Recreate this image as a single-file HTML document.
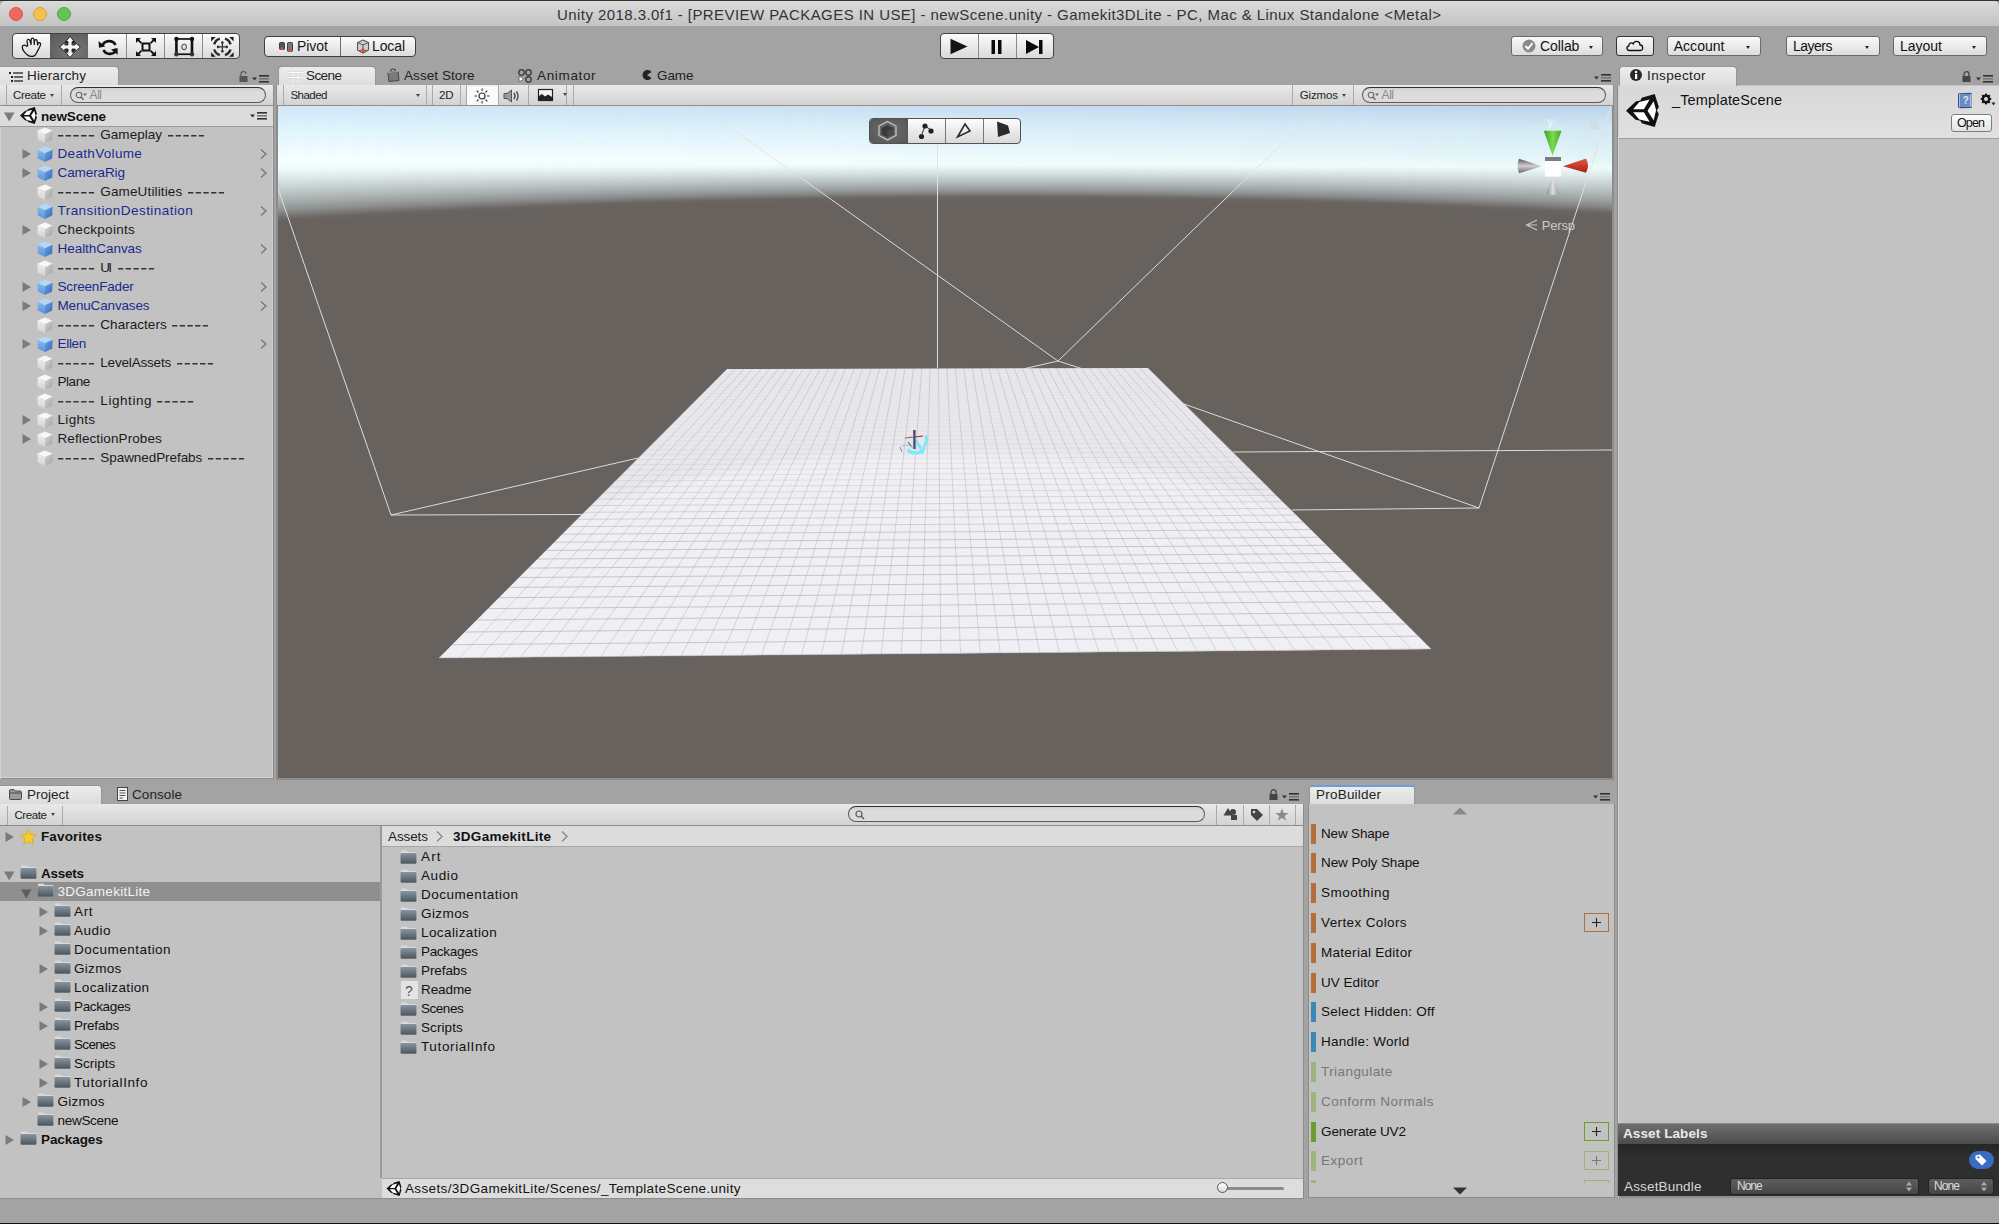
<!DOCTYPE html>
<html><head><meta charset="utf-8"><title>Unity</title>
<style>
*{margin:0;padding:0;box-sizing:border-box}
html,body{width:1999px;height:1224px;overflow:hidden;background:#000}
body{position:relative;font-family:"Liberation Sans",sans-serif;font-size:13px;color:#111}
.a{position:absolute}
svg.a{overflow:visible}
.t{position:absolute;white-space:pre;line-height:1}
#win{position:absolute;left:0;top:0;width:1999px;height:1224px;background:#A3A3A3;overflow:hidden}
.light{position:absolute;top:6px;width:14px;height:14px;border-radius:50%}
.rbtn{border:1px solid #6A6A6A;border-radius:3px;background:linear-gradient(#F9F9F9,#DDDDDD)}
.caret{position:absolute;width:0;height:0;border-left:2.5px solid transparent;border-right:2.5px solid transparent;border-top:3.5px solid #222}
.tab{position:absolute;background:linear-gradient(#EDEDED,#DCDCDC);border:1px solid #979797;border-bottom:none;border-radius:4px 4px 0 0}
.tbar{position:absolute;background:linear-gradient(#E9E9E9,#D2D2D2);border-bottom:1px solid #8E8E8E}

</style></head><body>
<div id="win">
<div class="a" style="left:0px;top:0px;width:1999px;height:1px;background:#33322A"></div>
<div class="a" style="left:0px;top:1px;width:1999px;height:25px;background:linear-gradient(#E0E0E0,#D9D9D9 8%,#C3C3C3);border-radius:5px 5px 0 0"></div>
<div class="a" style="left:0px;top:1px;width:6px;height:6px;background:#111;z-index:-1"></div>
<div class="light" style="left:9px;top:7px;background:#EE6A5E;border:1px solid #DC5548"></div>
<div class="light" style="left:33px;top:7px;background:#F5BE4F;border:1px solid #DCA23A"></div>
<div class="light" style="left:57px;top:7px;background:#62C554;border:1px solid #4CA83F"></div>
<div class="t" style="left:557px;top:6.80px;font-size:15px;letter-spacing:0.433px;color:#333333;">Unity 2018.3.0f1 - [PREVIEW PACKAGES IN USE] - newScene.unity - Gamekit3DLite - PC, Mac &amp; Linux Standalone &lt;Metal&gt;</div>
<div class="a" style="left:0px;top:1223px;width:1999px;height:1px;background:#111"></div>
<!-- MAIN TOOLBAR -->
  
  <div class="a btngrp" style="left:12px;top:33px;width:228px;height:26px;border:1px solid #444;border-radius:4px;overflow:hidden;background:linear-gradient(#FBFBFB,#DADADA)">
    <div class="a" style="left:37px;top:0;width:38px;height:26px;background:radial-gradient(ellipse at 60% 70%,#7A7A7A,#585858)"></div>
    <div class="a" style="left:113px;top:0;width:1px;height:26px;background:#8A8A8A"></div>
    <div class="a" style="left:151px;top:0;width:1px;height:26px;background:#8A8A8A"></div>
    <div class="a" style="left:189px;top:0;width:1px;height:26px;background:#8A8A8A"></div>
    <svg class="a" style="left:0;top:0" width="228" height="26" viewBox="0 0 228 26">
      <!-- hand -->
      <path d="M13.8 12.8 C13 10.6 9.6 10.6 9.3 12.8 C9.2 15.5 12 19 14.5 21 C16 22.3 17.5 22.6 19.5 22.4 C22 22.2 23 20.5 24 18 C25.5 15 27.6 12.5 27.6 10 C27.6 8.4 25.8 8 25 9.6 L24.6 11 L24.2 7.2 C24 5.2 21.8 5 21.5 7 L21.3 10.5 L21 5.8 C20.8 3.6 18.4 3.6 18.2 5.8 L18 10.5 L17 6.8 C16.5 4.8 13.8 5 14 7.2 L14.8 12.5" fill="none" stroke="#111" stroke-width="1.25" stroke-linejoin="round"/>
      <!-- move (white on dark) -->
      <g transform="translate(57,13)" stroke="#111" stroke-width="0.8" stroke-linejoin="round">
        <path d="M0 -10.6 L4.4 -5.2 L2 -5.2 L2 -2 L5.2 -2 L5.2 -4.4 L10.3 0 L5.2 4.4 L5.2 2 L2 2 L2 5.2 L4.4 5.2 L0 10.6 L-4.4 5.2 L-2 5.2 L-2 2 L-5.2 2 L-5.2 4.4 L-10.3 0 L-5.2 -4.4 L-5.2 -2 L-2 -2 L-2 -5.2 L-4.4 -5.2 Z" fill="#F6F6F6"/>
      </g>
      <g fill="#1A1A1A"><rect x="52.6" y="7.2" width="2.2" height="2.2"/><rect x="59.4" y="7.2" width="2.2" height="2.2"/><rect x="52.6" y="15.2" width="2.2" height="2.2"/><rect x="59.4" y="15.2" width="2.2" height="2.2"/></g>
      <!-- rotate -->
      <g fill="none" stroke="#111" stroke-width="2.6" stroke-linecap="butt">
        <path d="M89.5 11.5 A7 6.5 0 0 1 102.5 11"/>
        <path d="M103.6 15.2 A7 6.5 0 0 1 90.5 16"/>
      </g>
      <path d="M85.5 7 L86 13.8 L92.2 12.5 Z M104.8 20.8 L104.3 14 L98 15.5 Z" fill="#111"/>
      <!-- scale -->
      <g transform="translate(133,13)" fill="#111">
        <rect x="-3.5" y="-3.5" width="7" height="7" fill="none" stroke="#111" stroke-width="2"/>
        <path d="M-10 -9 L-5 -9 L-6.7 -7.3 L-4 -4.6 L-5.4 -3.2 L-8.1 -5.9 L-10 -4 Z"/>
        <path d="M10 -9 L5 -9 L6.7 -7.3 L4 -4.6 L5.4 -3.2 L8.1 -5.9 L10 -4 Z"/>
        <path d="M-10 9 L-5 9 L-6.7 7.3 L-4 4.6 L-5.4 3.2 L-8.1 5.9 L-10 4 Z"/>
        <path d="M10 9 L5 9 L6.7 7.3 L4 4.6 L5.4 3.2 L8.1 5.9 L10 4 Z"/>
      </g>
      <!-- rect -->
      <g fill="#111">
        <rect x="162.1" y="5" width="2.6" height="15.3"/><rect x="177.7" y="5" width="2.6" height="15.3"/>
        <rect x="163.4" y="4.1" width="15.6" height="1.7"/><rect x="163.4" y="19.4" width="15.6" height="1.7"/>
        <circle cx="163.4" cy="4.9" r="2.2"/><circle cx="179" cy="4.9" r="2.2"/><circle cx="163.4" cy="20.3" r="2.2" fill="#333"/><circle cx="179" cy="20.3" r="2.2" fill="#333"/>
      </g>
      <ellipse cx="171.1" cy="12.9" rx="2.3" ry="2.8" fill="none" stroke="#333" stroke-width="1"/>
      <!-- transform -->
      <g transform="translate(209.4,12.9)">
        <g fill="none" stroke="#2A2A2A" stroke-width="2.4">
          <path d="M-8.2 -2.6 A8.6 8.6 0 0 1 -2.6 -8.2"/><path d="M2.6 -8.2 A8.6 8.6 0 0 1 8.2 -2.6"/>
          <path d="M8.2 2.6 A8.6 8.6 0 0 1 2.6 8.2"/><path d="M-2.6 8.2 A8.6 8.6 0 0 1 -8.2 2.6"/>
        </g>
        <path d="M0 -4.5 V4.5 M-4.5 0 H4.5" stroke="#333" stroke-width="1.3"/>
        <g fill="#333"><circle cx="0" cy="-4.3" r="1.3"/><circle cx="0" cy="4.3" r="1.3"/><circle cx="-4.3" cy="0" r="1.3"/><circle cx="4.3" cy="0" r="1.3"/></g>
        <path d="M-11.2 -9.8 L-6.8 -9.8 L-11.2 -5.4 Z M11.2 -9.8 L6.8 -9.8 L11.2 -5.4 Z M-11.2 9.8 L-6.8 9.8 L-11.2 5.4 Z M11.2 9.8 L6.8 9.8 L11.2 5.4 Z" fill="#1A1A1A"/>
      </g>
    </svg>
  </div>
  <!-- pivot/local -->
  <div class="a" style="left:264px;top:36px;width:152px;height:21px;border:1px solid #3E3E3E;border-radius:4px;overflow:hidden;background:linear-gradient(#FBFBFB,#DCDCDC)">
    <div class="a" style="left:75px;top:0;width:1px;height:21px;background:#6A6A6A"></div>
    <svg class="a" style="left:14px;top:5px" width="16" height="12" viewBox="0 0 16 12"><rect x="0.5" y="0.5" width="5" height="7" rx="1" fill="#555" stroke="#222" stroke-width="0.8"/><circle cx="3" cy="6.5" r="1.6" fill="#E04848"/><rect x="8.5" y="0.5" width="5" height="9" rx="1" fill="#777" stroke="#222" stroke-width="0.8"/><circle cx="11" cy="8.5" r="1.6" fill="#E04848"/></svg>
    <div class="t" style="left:32px;top:2.3px;font-size:14px;letter-spacing:-0.05px;color:#151515">Pivot</div>
    <svg class="a" style="left:91px;top:2px" width="14" height="15" viewBox="0 0 14 15"><path d="M7 1 L12.5 3.5 L12.5 11 L7 14 L1.5 11 L1.5 3.5 Z" fill="#D0D0D0" stroke="#555" stroke-width="1.1"/><path d="M1.5 3.5 L7 6 L12.5 3.5 M7 6 V14" stroke="#555" fill="none" stroke-width="1"/><path d="M7 9 V14 M3 12 L7 10.5 L11 12" stroke="#D84040" stroke-width="1.3" fill="none"/></svg>
    <div class="t" style="left:107px;top:2.3px;font-size:14px;letter-spacing:-0.1px;color:#151515">Local</div>
  </div>
  <!-- play group -->
  <div class="a" style="left:940px;top:33px;width:114px;height:26px;border:1px solid #444;border-radius:4px;overflow:hidden;background:linear-gradient(#FBFBFB,#DADADA)">
    <div class="a" style="left:37px;top:0;width:1px;height:26px;background:#8A8A8A"></div>
    <div class="a" style="left:75px;top:0;width:1px;height:26px;background:#8A8A8A"></div>
    <svg class="a" style="left:0;top:0" width="115" height="26" viewBox="0 0 115 26">
      <path d="M9.5 4.8 L26.5 12.5 L9.5 20.3 Z" fill="#151515"/>
      <rect x="50.5" y="6" width="3.5" height="14" fill="#0A0A0A"/><rect x="57" y="6" width="3.5" height="14" fill="#0A0A0A"/>
      <path d="M85 6 L98 13 L85 20 Z" fill="#0A0A0A"/><rect x="98" y="6" width="3.5" height="14" fill="#0A0A0A"/>
    </svg>
  </div>
  
<div class="a rbtn" style="left:1511px;top:36px;width:92px;height:20px;"></div>
<svg class="a" style="left:1522px;top:39px;" width="14" height="14" viewBox="0 0 14 14"><circle cx="7" cy="7" r="6.5" fill="#8A8A8A"/><path d="M3.5 7 L6 9.8 L10.5 4" fill="none" stroke="#fff" stroke-width="1.9"/></svg>
<div class="t" style="left:1540px;top:39.40px;font-size:14px;letter-spacing:-0.058px;color:#111;">Collab</div>
<div class="caret" style="left:1589px;top:46px"></div>
<div class="a rbtn" style="left:1616px;top:36px;width:38px;height:20px;border-color:#333"></div>
<svg class="a" style="left:1625px;top:39px;" width="20" height="13" viewBox="0 0 20 13"><path d="M4.5 11.5 C1.5 11.5 1 7.5 3.8 7 C3.5 4 7 3 8.2 4.8 C9.5 1.2 15 1.5 15 6 C18.5 6 18.5 11.5 15.5 11.5 Z" fill="none" stroke="#111" stroke-width="1.3"/></svg>
<div class="a rbtn" style="left:1667px;top:36px;width:94px;height:20px;"></div>
<div class="t" style="left:1673.7px;top:39.40px;font-size:14px;letter-spacing:0.036px;color:#111;">Account</div>
<div class="caret" style="left:1745.7px;top:46px"></div>
<div class="a rbtn" style="left:1786px;top:36px;width:94px;height:20px;"></div>
<div class="t" style="left:1793px;top:39.40px;font-size:14px;letter-spacing:-0.503px;color:#111;">Layers</div>
<div class="caret" style="left:1864.5px;top:46px"></div>
<div class="a rbtn" style="left:1893px;top:36px;width:94px;height:20px;"></div>
<div class="t" style="left:1900px;top:39.40px;font-size:14px;letter-spacing:-0.006px;color:#111;">Layout</div>
<div class="caret" style="left:1972px;top:46px"></div>
<div class="a" style="left:0px;top:85px;width:274px;height:694px;background:#C2C2C2;border-right:1px solid #8C8C8C;border-bottom:1px solid #8C8C8C"></div>
<div class="a" style="left:0px;top:85px;width:1px;height:694px;background:#D4D4D4"></div>
<div class="a" style="left:272px;top:127px;width:1px;height:651px;background:#CDCDCD"></div>
<div class="a" style="left:0px;top:777px;width:273px;height:1px;background:#D2D2D2"></div>
<div class="tab" style="left:0px;top:66px;width:119px;height:20px;border-left:none;border-top-left-radius:0"></div>
<svg class="a" style="left:9px;top:72px;" width="14" height="10" viewBox="0 0 14 10"><rect x="0" y="0" width="2" height="2" fill="#222"/><rect x="4" y="0.3" width="10" height="1.4" fill="#333"/><rect x="2" y="4" width="2" height="2" fill="#222"/><rect x="5" y="4.3" width="9" height="1.4" fill="#333"/><rect x="2" y="8" width="2" height="2" fill="#222"/><rect x="5" y="8.3" width="9" height="1.4" fill="#333"/></svg>
<div class="t" style="left:27px;top:68.57px;font-size:13.5px;letter-spacing:0.155px;color:#222;">Hierarchy</div>
<svg class="a" style="left:239px;top:71px;" width="9" height="11" viewBox="0 0 9 11"><path d="M2 5 L2 3 A2.5 2.5 0 0 1 7 3" fill="none" stroke="#555" stroke-width="1.2"/><rect x="0.5" y="5" width="8" height="6" fill="#555"/></svg>
<svg class="a" style="left:252px;top:75px;" width="18" height="9" viewBox="0 0 18 9"><path d="M0 2.5 L5 2.5 L2.5 5.5 Z" fill="#333"/><rect x="7" y="0" width="10" height="1.6" fill="#333"/><rect x="7" y="3" width="10" height="1.6" fill="#777"/><rect x="7" y="6" width="10" height="1.6" fill="#333"/></svg>
<div class="tbar" style="left:0px;top:85px;width:273px;height:21px;"></div>
<div class="a" style="left:6px;top:85px;width:1px;height:20px;background:#A8A8A8"></div>
<div class="a" style="left:61px;top:85px;width:1px;height:20px;background:#A8A8A8"></div>
<div class="t" style="left:13px;top:89.77px;font-size:11.5px;letter-spacing:-0.303px;color:#222;">Create</div>
<div class="caret" style="left:50px;top:94px;border-top-color:#444"></div>
<div class="a" style="left:70px;top:87px;width:196px;height:16px;border:1px solid #5A5A5A;border-top-color:#2E2E2E;border-radius:8px;background:linear-gradient(#D0D0D0,#DCDCDC 30%,#DCDCDC)"></div>
<svg class="a" style="left:75px;top:90.5px;" width="14" height="10" viewBox="0 0 14 10"><circle cx="4" cy="4" r="2.8" fill="none" stroke="#666" stroke-width="1.1"/><path d="M6 6 L8.5 8.8" stroke="#666" stroke-width="1.3"/><path d="M8 2.5 L12 2.5 L10 5 Z" fill="#666"/></svg>
<div class="t" style="left:89.6px;top:89.04px;font-size:12px;letter-spacing:-0.468px;color:#8A8A8A;">All</div>
<div class="a" style="left:0px;top:106px;width:273px;height:21px;background:#DCDCDC;border-bottom:1px solid #9A9A9A"></div>
<svg class="a" style="left:4px;top:112px;" width="11" height="10" viewBox="0 0 11 10"><path d="M0 0.5 L10.5 0.5 L5.25 9.5 Z" fill="#7A7A7A"/></svg>
<svg class="a" style="left:20px;top:107px;overflow:visible" width="17" height="17" viewBox="0 0 100 100"><path d="M0 50.5 L29.3 22.9 L43.5 19.8 L47.8 11.5 L87 0 L99.5 39.6 L93.5 50 L99.5 60.4 L87 100 L47.8 88.5 L43.5 81.3 L29.3 78.1 Z" fill="#111"/><path d="M21.7 46.4 L40.2 24.5 L71.7 16.7 L54.3 46.4 Z M21.7 55.2 L54.3 55.2 L71.7 84.4 L40.2 77 Z M65.2 50.5 L83.7 21.9 L91.3 48.9 L83.7 79.2 Z" fill="#fff"/></svg>
<div class="t" style="left:41px;top:109.57px;font-size:13.5px;letter-spacing:-0.147px;color:#111;font-weight:bold;">newScene</div>
<svg class="a" style="left:250px;top:112px;" width="18" height="9" viewBox="0 0 18 9"><path d="M0 2.5 L5 2.5 L2.5 5.5 Z" fill="#333"/><rect x="7" y="0" width="10" height="1.6" fill="#333"/><rect x="7" y="3" width="10" height="1.6" fill="#777"/><rect x="7" y="6" width="10" height="1.6" fill="#333"/></svg>
<svg class="a" style="left:37px;top:127px;" width="16" height="16" viewBox="0 0 16 16"><defs><linearGradient id="cwl" x1="0" y1="0" x2="0" y2="1"><stop offset="0" stop-color="#EEEEEE"/><stop offset="1" stop-color="#D2D2D2"/></linearGradient><linearGradient id="cwr" x1="0" y1="0" x2="1" y2="1"><stop offset="0" stop-color="#D4D4D4"/><stop offset="1" stop-color="#A0A0A0"/></linearGradient></defs><path d="M8 0.4 L15.6 3.8 L8 7.3 L0.4 3.8 Z" fill="#F8F8F8"/><path d="M0.4 3.8 L8 7.3 L8 16 L0.8 12.4 Z" fill="url(#cwl)"/><path d="M15.6 3.8 L8 7.3 L8 16 L15.2 12.4 Z" fill="url(#cwr)"/></svg>
<svg class="a" style="left:57.5px;top:134.5px;" width="39" height="2" viewBox="0 0 39 2"><rect x="0.00" y="0" width="5.3" height="1.5" fill="#333"/><rect x="7.70" y="0" width="5.3" height="1.5" fill="#333"/><rect x="15.40" y="0" width="5.3" height="1.5" fill="#333"/><rect x="23.10" y="0" width="5.3" height="1.5" fill="#333"/><rect x="30.80" y="0" width="5.3" height="1.5" fill="#333"/></svg>
<div class="t" style="left:100.3px;top:128.07px;font-size:13.5px;letter-spacing:0.025px;color:#1A1A1A;">Gameplay</div>
<svg class="a" style="left:167.5px;top:134.5px;" width="39" height="2" viewBox="0 0 39 2"><rect x="0.00" y="0" width="5.3" height="1.5" fill="#333"/><rect x="7.70" y="0" width="5.3" height="1.5" fill="#333"/><rect x="15.40" y="0" width="5.3" height="1.5" fill="#333"/><rect x="23.10" y="0" width="5.3" height="1.5" fill="#333"/><rect x="30.80" y="0" width="5.3" height="1.5" fill="#333"/></svg>
<svg class="a" style="left:22px;top:149px;" width="10" height="10" viewBox="0 0 10 10"><path d="M0.5 0 L9 5 L0.5 10 Z" fill="#7B7B7B"/></svg>
<svg class="a" style="left:37px;top:146px;" width="16" height="16" viewBox="0 0 16 16"><defs><linearGradient id="cbl" x1="0" y1="0" x2="0" y2="1"><stop offset="0" stop-color="#86BAEE"/><stop offset="1" stop-color="#5A94D8"/></linearGradient><linearGradient id="cbr" x1="0" y1="0" x2="1" y2="1"><stop offset="0" stop-color="#6AA2E0"/><stop offset="1" stop-color="#3568B8"/></linearGradient></defs><path d="M8 0.4 L15.6 3.8 L8 7.3 L0.4 3.8 Z" fill="#B4D8F6"/><path d="M0.4 3.8 L8 7.3 L8 16 L0.8 12.4 Z" fill="url(#cbl)"/><path d="M15.6 3.8 L8 7.3 L8 16 L15.2 12.4 Z" fill="url(#cbr)"/></svg>
<div class="t" style="left:57.5px;top:147.07px;font-size:13.5px;letter-spacing:0.325px;color:#1A2A8E;">DeathVolume</div>
<svg class="a" style="left:260px;top:149px;" width="7" height="10" viewBox="0 0 7 10"><path d="M1 0.5 L6 5 L1 9.5" fill="none" stroke="#777" stroke-width="1.4"/></svg>
<svg class="a" style="left:22px;top:168px;" width="10" height="10" viewBox="0 0 10 10"><path d="M0.5 0 L9 5 L0.5 10 Z" fill="#7B7B7B"/></svg>
<svg class="a" style="left:37px;top:165px;" width="16" height="16" viewBox="0 0 16 16"><defs><linearGradient id="cbl" x1="0" y1="0" x2="0" y2="1"><stop offset="0" stop-color="#86BAEE"/><stop offset="1" stop-color="#5A94D8"/></linearGradient><linearGradient id="cbr" x1="0" y1="0" x2="1" y2="1"><stop offset="0" stop-color="#6AA2E0"/><stop offset="1" stop-color="#3568B8"/></linearGradient></defs><path d="M8 0.4 L15.6 3.8 L8 7.3 L0.4 3.8 Z" fill="#B4D8F6"/><path d="M0.4 3.8 L8 7.3 L8 16 L0.8 12.4 Z" fill="url(#cbl)"/><path d="M15.6 3.8 L8 7.3 L8 16 L15.2 12.4 Z" fill="url(#cbr)"/></svg>
<div class="t" style="left:57.5px;top:166.07px;font-size:13.5px;letter-spacing:-0.096px;color:#1A2A8E;">CameraRig</div>
<svg class="a" style="left:260px;top:168px;" width="7" height="10" viewBox="0 0 7 10"><path d="M1 0.5 L6 5 L1 9.5" fill="none" stroke="#777" stroke-width="1.4"/></svg>
<svg class="a" style="left:37px;top:184px;" width="16" height="16" viewBox="0 0 16 16"><defs><linearGradient id="cwl" x1="0" y1="0" x2="0" y2="1"><stop offset="0" stop-color="#EEEEEE"/><stop offset="1" stop-color="#D2D2D2"/></linearGradient><linearGradient id="cwr" x1="0" y1="0" x2="1" y2="1"><stop offset="0" stop-color="#D4D4D4"/><stop offset="1" stop-color="#A0A0A0"/></linearGradient></defs><path d="M8 0.4 L15.6 3.8 L8 7.3 L0.4 3.8 Z" fill="#F8F8F8"/><path d="M0.4 3.8 L8 7.3 L8 16 L0.8 12.4 Z" fill="url(#cwl)"/><path d="M15.6 3.8 L8 7.3 L8 16 L15.2 12.4 Z" fill="url(#cwr)"/></svg>
<svg class="a" style="left:57.5px;top:191.5px;" width="39" height="2" viewBox="0 0 39 2"><rect x="0.00" y="0" width="5.3" height="1.5" fill="#333"/><rect x="7.70" y="0" width="5.3" height="1.5" fill="#333"/><rect x="15.40" y="0" width="5.3" height="1.5" fill="#333"/><rect x="23.10" y="0" width="5.3" height="1.5" fill="#333"/><rect x="30.80" y="0" width="5.3" height="1.5" fill="#333"/></svg>
<div class="t" style="left:100.3px;top:185.07px;font-size:13.5px;letter-spacing:0.136px;color:#1A1A1A;">GameUtilities</div>
<svg class="a" style="left:187.7px;top:191.5px;" width="39" height="2" viewBox="0 0 39 2"><rect x="0.00" y="0" width="5.3" height="1.5" fill="#333"/><rect x="7.70" y="0" width="5.3" height="1.5" fill="#333"/><rect x="15.40" y="0" width="5.3" height="1.5" fill="#333"/><rect x="23.10" y="0" width="5.3" height="1.5" fill="#333"/><rect x="30.80" y="0" width="5.3" height="1.5" fill="#333"/></svg>
<svg class="a" style="left:37px;top:203px;" width="16" height="16" viewBox="0 0 16 16"><defs><linearGradient id="cbl" x1="0" y1="0" x2="0" y2="1"><stop offset="0" stop-color="#86BAEE"/><stop offset="1" stop-color="#5A94D8"/></linearGradient><linearGradient id="cbr" x1="0" y1="0" x2="1" y2="1"><stop offset="0" stop-color="#6AA2E0"/><stop offset="1" stop-color="#3568B8"/></linearGradient></defs><path d="M8 0.4 L15.6 3.8 L8 7.3 L0.4 3.8 Z" fill="#B4D8F6"/><path d="M0.4 3.8 L8 7.3 L8 16 L0.8 12.4 Z" fill="url(#cbl)"/><path d="M15.6 3.8 L8 7.3 L8 16 L15.2 12.4 Z" fill="url(#cbr)"/></svg>
<div class="t" style="left:57.5px;top:204.07px;font-size:13.5px;letter-spacing:0.45px;color:#1A2A8E;">TransitionDestination</div>
<svg class="a" style="left:260px;top:206px;" width="7" height="10" viewBox="0 0 7 10"><path d="M1 0.5 L6 5 L1 9.5" fill="none" stroke="#777" stroke-width="1.4"/></svg>
<svg class="a" style="left:22px;top:225px;" width="10" height="10" viewBox="0 0 10 10"><path d="M0.5 0 L9 5 L0.5 10 Z" fill="#7B7B7B"/></svg>
<svg class="a" style="left:37px;top:222px;" width="16" height="16" viewBox="0 0 16 16"><defs><linearGradient id="cwl" x1="0" y1="0" x2="0" y2="1"><stop offset="0" stop-color="#EEEEEE"/><stop offset="1" stop-color="#D2D2D2"/></linearGradient><linearGradient id="cwr" x1="0" y1="0" x2="1" y2="1"><stop offset="0" stop-color="#D4D4D4"/><stop offset="1" stop-color="#A0A0A0"/></linearGradient></defs><path d="M8 0.4 L15.6 3.8 L8 7.3 L0.4 3.8 Z" fill="#F8F8F8"/><path d="M0.4 3.8 L8 7.3 L8 16 L0.8 12.4 Z" fill="url(#cwl)"/><path d="M15.6 3.8 L8 7.3 L8 16 L15.2 12.4 Z" fill="url(#cwr)"/></svg>
<div class="t" style="left:57.5px;top:223.07px;font-size:13.5px;letter-spacing:0.301px;color:#1A1A1A;">Checkpoints</div>
<svg class="a" style="left:37px;top:241px;" width="16" height="16" viewBox="0 0 16 16"><defs><linearGradient id="cbl" x1="0" y1="0" x2="0" y2="1"><stop offset="0" stop-color="#86BAEE"/><stop offset="1" stop-color="#5A94D8"/></linearGradient><linearGradient id="cbr" x1="0" y1="0" x2="1" y2="1"><stop offset="0" stop-color="#6AA2E0"/><stop offset="1" stop-color="#3568B8"/></linearGradient></defs><path d="M8 0.4 L15.6 3.8 L8 7.3 L0.4 3.8 Z" fill="#B4D8F6"/><path d="M0.4 3.8 L8 7.3 L8 16 L0.8 12.4 Z" fill="url(#cbl)"/><path d="M15.6 3.8 L8 7.3 L8 16 L15.2 12.4 Z" fill="url(#cbr)"/></svg>
<div class="t" style="left:57.5px;top:242.07px;font-size:13.5px;letter-spacing:-0.045px;color:#1A2A8E;">HealthCanvas</div>
<svg class="a" style="left:260px;top:244px;" width="7" height="10" viewBox="0 0 7 10"><path d="M1 0.5 L6 5 L1 9.5" fill="none" stroke="#777" stroke-width="1.4"/></svg>
<svg class="a" style="left:37px;top:260px;" width="16" height="16" viewBox="0 0 16 16"><defs><linearGradient id="cwl" x1="0" y1="0" x2="0" y2="1"><stop offset="0" stop-color="#EEEEEE"/><stop offset="1" stop-color="#D2D2D2"/></linearGradient><linearGradient id="cwr" x1="0" y1="0" x2="1" y2="1"><stop offset="0" stop-color="#D4D4D4"/><stop offset="1" stop-color="#A0A0A0"/></linearGradient></defs><path d="M8 0.4 L15.6 3.8 L8 7.3 L0.4 3.8 Z" fill="#F8F8F8"/><path d="M0.4 3.8 L8 7.3 L8 16 L0.8 12.4 Z" fill="url(#cwl)"/><path d="M15.6 3.8 L8 7.3 L8 16 L15.2 12.4 Z" fill="url(#cwr)"/></svg>
<svg class="a" style="left:57.5px;top:267.5px;" width="39" height="2" viewBox="0 0 39 2"><rect x="0.00" y="0" width="5.3" height="1.5" fill="#333"/><rect x="7.70" y="0" width="5.3" height="1.5" fill="#333"/><rect x="15.40" y="0" width="5.3" height="1.5" fill="#333"/><rect x="23.10" y="0" width="5.3" height="1.5" fill="#333"/><rect x="30.80" y="0" width="5.3" height="1.5" fill="#333"/></svg>
<div class="t" style="left:100.3px;top:261.07px;font-size:13.5px;letter-spacing:-1.8px;color:#1A1A1A;">UI</div>
<svg class="a" style="left:117.5px;top:267.5px;" width="39" height="2" viewBox="0 0 39 2"><rect x="0.00" y="0" width="5.3" height="1.5" fill="#333"/><rect x="7.70" y="0" width="5.3" height="1.5" fill="#333"/><rect x="15.40" y="0" width="5.3" height="1.5" fill="#333"/><rect x="23.10" y="0" width="5.3" height="1.5" fill="#333"/><rect x="30.80" y="0" width="5.3" height="1.5" fill="#333"/></svg>
<svg class="a" style="left:22px;top:282px;" width="10" height="10" viewBox="0 0 10 10"><path d="M0.5 0 L9 5 L0.5 10 Z" fill="#7B7B7B"/></svg>
<svg class="a" style="left:37px;top:279px;" width="16" height="16" viewBox="0 0 16 16"><defs><linearGradient id="cbl" x1="0" y1="0" x2="0" y2="1"><stop offset="0" stop-color="#86BAEE"/><stop offset="1" stop-color="#5A94D8"/></linearGradient><linearGradient id="cbr" x1="0" y1="0" x2="1" y2="1"><stop offset="0" stop-color="#6AA2E0"/><stop offset="1" stop-color="#3568B8"/></linearGradient></defs><path d="M8 0.4 L15.6 3.8 L8 7.3 L0.4 3.8 Z" fill="#B4D8F6"/><path d="M0.4 3.8 L8 7.3 L8 16 L0.8 12.4 Z" fill="url(#cbl)"/><path d="M15.6 3.8 L8 7.3 L8 16 L15.2 12.4 Z" fill="url(#cbr)"/></svg>
<div class="t" style="left:57.5px;top:280.07px;font-size:13.5px;letter-spacing:-0.183px;color:#1A2A8E;">ScreenFader</div>
<svg class="a" style="left:260px;top:282px;" width="7" height="10" viewBox="0 0 7 10"><path d="M1 0.5 L6 5 L1 9.5" fill="none" stroke="#777" stroke-width="1.4"/></svg>
<svg class="a" style="left:22px;top:301px;" width="10" height="10" viewBox="0 0 10 10"><path d="M0.5 0 L9 5 L0.5 10 Z" fill="#7B7B7B"/></svg>
<svg class="a" style="left:37px;top:298px;" width="16" height="16" viewBox="0 0 16 16"><defs><linearGradient id="cbl" x1="0" y1="0" x2="0" y2="1"><stop offset="0" stop-color="#86BAEE"/><stop offset="1" stop-color="#5A94D8"/></linearGradient><linearGradient id="cbr" x1="0" y1="0" x2="1" y2="1"><stop offset="0" stop-color="#6AA2E0"/><stop offset="1" stop-color="#3568B8"/></linearGradient></defs><path d="M8 0.4 L15.6 3.8 L8 7.3 L0.4 3.8 Z" fill="#B4D8F6"/><path d="M0.4 3.8 L8 7.3 L8 16 L0.8 12.4 Z" fill="url(#cbl)"/><path d="M15.6 3.8 L8 7.3 L8 16 L15.2 12.4 Z" fill="url(#cbr)"/></svg>
<div class="t" style="left:57.5px;top:299.07px;font-size:13.5px;letter-spacing:-0.163px;color:#1A2A8E;">MenuCanvases</div>
<svg class="a" style="left:260px;top:301px;" width="7" height="10" viewBox="0 0 7 10"><path d="M1 0.5 L6 5 L1 9.5" fill="none" stroke="#777" stroke-width="1.4"/></svg>
<svg class="a" style="left:37px;top:317px;" width="16" height="16" viewBox="0 0 16 16"><defs><linearGradient id="cwl" x1="0" y1="0" x2="0" y2="1"><stop offset="0" stop-color="#EEEEEE"/><stop offset="1" stop-color="#D2D2D2"/></linearGradient><linearGradient id="cwr" x1="0" y1="0" x2="1" y2="1"><stop offset="0" stop-color="#D4D4D4"/><stop offset="1" stop-color="#A0A0A0"/></linearGradient></defs><path d="M8 0.4 L15.6 3.8 L8 7.3 L0.4 3.8 Z" fill="#F8F8F8"/><path d="M0.4 3.8 L8 7.3 L8 16 L0.8 12.4 Z" fill="url(#cwl)"/><path d="M15.6 3.8 L8 7.3 L8 16 L15.2 12.4 Z" fill="url(#cwr)"/></svg>
<svg class="a" style="left:57.5px;top:324.5px;" width="39" height="2" viewBox="0 0 39 2"><rect x="0.00" y="0" width="5.3" height="1.5" fill="#333"/><rect x="7.70" y="0" width="5.3" height="1.5" fill="#333"/><rect x="15.40" y="0" width="5.3" height="1.5" fill="#333"/><rect x="23.10" y="0" width="5.3" height="1.5" fill="#333"/><rect x="30.80" y="0" width="5.3" height="1.5" fill="#333"/></svg>
<div class="t" style="left:100.3px;top:318.07px;font-size:13.5px;letter-spacing:0.042px;color:#1A1A1A;">Characters</div>
<svg class="a" style="left:172.2px;top:324.5px;" width="39" height="2" viewBox="0 0 39 2"><rect x="0.00" y="0" width="5.3" height="1.5" fill="#333"/><rect x="7.70" y="0" width="5.3" height="1.5" fill="#333"/><rect x="15.40" y="0" width="5.3" height="1.5" fill="#333"/><rect x="23.10" y="0" width="5.3" height="1.5" fill="#333"/><rect x="30.80" y="0" width="5.3" height="1.5" fill="#333"/></svg>
<svg class="a" style="left:22px;top:339px;" width="10" height="10" viewBox="0 0 10 10"><path d="M0.5 0 L9 5 L0.5 10 Z" fill="#7B7B7B"/></svg>
<svg class="a" style="left:37px;top:336px;" width="16" height="16" viewBox="0 0 16 16"><defs><linearGradient id="cbl" x1="0" y1="0" x2="0" y2="1"><stop offset="0" stop-color="#86BAEE"/><stop offset="1" stop-color="#5A94D8"/></linearGradient><linearGradient id="cbr" x1="0" y1="0" x2="1" y2="1"><stop offset="0" stop-color="#6AA2E0"/><stop offset="1" stop-color="#3568B8"/></linearGradient></defs><path d="M8 0.4 L15.6 3.8 L8 7.3 L0.4 3.8 Z" fill="#B4D8F6"/><path d="M0.4 3.8 L8 7.3 L8 16 L0.8 12.4 Z" fill="url(#cbl)"/><path d="M15.6 3.8 L8 7.3 L8 16 L15.2 12.4 Z" fill="url(#cbr)"/></svg>
<div class="t" style="left:57.5px;top:337.07px;font-size:13.5px;letter-spacing:-0.305px;color:#1A2A8E;">Ellen</div>
<svg class="a" style="left:260px;top:339px;" width="7" height="10" viewBox="0 0 7 10"><path d="M1 0.5 L6 5 L1 9.5" fill="none" stroke="#777" stroke-width="1.4"/></svg>
<svg class="a" style="left:37px;top:355px;" width="16" height="16" viewBox="0 0 16 16"><defs><linearGradient id="cwl" x1="0" y1="0" x2="0" y2="1"><stop offset="0" stop-color="#EEEEEE"/><stop offset="1" stop-color="#D2D2D2"/></linearGradient><linearGradient id="cwr" x1="0" y1="0" x2="1" y2="1"><stop offset="0" stop-color="#D4D4D4"/><stop offset="1" stop-color="#A0A0A0"/></linearGradient></defs><path d="M8 0.4 L15.6 3.8 L8 7.3 L0.4 3.8 Z" fill="#F8F8F8"/><path d="M0.4 3.8 L8 7.3 L8 16 L0.8 12.4 Z" fill="url(#cwl)"/><path d="M15.6 3.8 L8 7.3 L8 16 L15.2 12.4 Z" fill="url(#cwr)"/></svg>
<svg class="a" style="left:57.5px;top:362.5px;" width="39" height="2" viewBox="0 0 39 2"><rect x="0.00" y="0" width="5.3" height="1.5" fill="#333"/><rect x="7.70" y="0" width="5.3" height="1.5" fill="#333"/><rect x="15.40" y="0" width="5.3" height="1.5" fill="#333"/><rect x="23.10" y="0" width="5.3" height="1.5" fill="#333"/><rect x="30.80" y="0" width="5.3" height="1.5" fill="#333"/></svg>
<div class="t" style="left:100.3px;top:356.07px;font-size:13.5px;letter-spacing:-0.188px;color:#1A1A1A;">LevelAssets</div>
<svg class="a" style="left:176.7px;top:362.5px;" width="39" height="2" viewBox="0 0 39 2"><rect x="0.00" y="0" width="5.3" height="1.5" fill="#333"/><rect x="7.70" y="0" width="5.3" height="1.5" fill="#333"/><rect x="15.40" y="0" width="5.3" height="1.5" fill="#333"/><rect x="23.10" y="0" width="5.3" height="1.5" fill="#333"/><rect x="30.80" y="0" width="5.3" height="1.5" fill="#333"/></svg>
<svg class="a" style="left:37px;top:374px;" width="16" height="16" viewBox="0 0 16 16"><defs><linearGradient id="cwl" x1="0" y1="0" x2="0" y2="1"><stop offset="0" stop-color="#EEEEEE"/><stop offset="1" stop-color="#D2D2D2"/></linearGradient><linearGradient id="cwr" x1="0" y1="0" x2="1" y2="1"><stop offset="0" stop-color="#D4D4D4"/><stop offset="1" stop-color="#A0A0A0"/></linearGradient></defs><path d="M8 0.4 L15.6 3.8 L8 7.3 L0.4 3.8 Z" fill="#F8F8F8"/><path d="M0.4 3.8 L8 7.3 L8 16 L0.8 12.4 Z" fill="url(#cwl)"/><path d="M15.6 3.8 L8 7.3 L8 16 L15.2 12.4 Z" fill="url(#cwr)"/></svg>
<div class="t" style="left:57.5px;top:375.07px;font-size:13.5px;letter-spacing:-0.457px;color:#1A1A1A;">Plane</div>
<svg class="a" style="left:37px;top:393px;" width="16" height="16" viewBox="0 0 16 16"><defs><linearGradient id="cwl" x1="0" y1="0" x2="0" y2="1"><stop offset="0" stop-color="#EEEEEE"/><stop offset="1" stop-color="#D2D2D2"/></linearGradient><linearGradient id="cwr" x1="0" y1="0" x2="1" y2="1"><stop offset="0" stop-color="#D4D4D4"/><stop offset="1" stop-color="#A0A0A0"/></linearGradient></defs><path d="M8 0.4 L15.6 3.8 L8 7.3 L0.4 3.8 Z" fill="#F8F8F8"/><path d="M0.4 3.8 L8 7.3 L8 16 L0.8 12.4 Z" fill="url(#cwl)"/><path d="M15.6 3.8 L8 7.3 L8 16 L15.2 12.4 Z" fill="url(#cwr)"/></svg>
<svg class="a" style="left:57.5px;top:400.5px;" width="39" height="2" viewBox="0 0 39 2"><rect x="0.00" y="0" width="5.3" height="1.5" fill="#333"/><rect x="7.70" y="0" width="5.3" height="1.5" fill="#333"/><rect x="15.40" y="0" width="5.3" height="1.5" fill="#333"/><rect x="23.10" y="0" width="5.3" height="1.5" fill="#333"/><rect x="30.80" y="0" width="5.3" height="1.5" fill="#333"/></svg>
<div class="t" style="left:100.3px;top:394.07px;font-size:13.5px;letter-spacing:0.573px;color:#1A1A1A;">Lighting</div>
<svg class="a" style="left:157.1px;top:400.5px;" width="39" height="2" viewBox="0 0 39 2"><rect x="0.00" y="0" width="5.3" height="1.5" fill="#333"/><rect x="7.70" y="0" width="5.3" height="1.5" fill="#333"/><rect x="15.40" y="0" width="5.3" height="1.5" fill="#333"/><rect x="23.10" y="0" width="5.3" height="1.5" fill="#333"/><rect x="30.80" y="0" width="5.3" height="1.5" fill="#333"/></svg>
<svg class="a" style="left:22px;top:415px;" width="10" height="10" viewBox="0 0 10 10"><path d="M0.5 0 L9 5 L0.5 10 Z" fill="#7B7B7B"/></svg>
<svg class="a" style="left:37px;top:412px;" width="16" height="16" viewBox="0 0 16 16"><defs><linearGradient id="cwl" x1="0" y1="0" x2="0" y2="1"><stop offset="0" stop-color="#EEEEEE"/><stop offset="1" stop-color="#D2D2D2"/></linearGradient><linearGradient id="cwr" x1="0" y1="0" x2="1" y2="1"><stop offset="0" stop-color="#D4D4D4"/><stop offset="1" stop-color="#A0A0A0"/></linearGradient></defs><path d="M8 0.4 L15.6 3.8 L8 7.3 L0.4 3.8 Z" fill="#F8F8F8"/><path d="M0.4 3.8 L8 7.3 L8 16 L0.8 12.4 Z" fill="url(#cwl)"/><path d="M15.6 3.8 L8 7.3 L8 16 L15.2 12.4 Z" fill="url(#cwr)"/></svg>
<div class="t" style="left:57.5px;top:413.07px;font-size:13.5px;letter-spacing:0.316px;color:#1A1A1A;">Lights</div>
<svg class="a" style="left:22px;top:434px;" width="10" height="10" viewBox="0 0 10 10"><path d="M0.5 0 L9 5 L0.5 10 Z" fill="#7B7B7B"/></svg>
<svg class="a" style="left:37px;top:431px;" width="16" height="16" viewBox="0 0 16 16"><defs><linearGradient id="cwl" x1="0" y1="0" x2="0" y2="1"><stop offset="0" stop-color="#EEEEEE"/><stop offset="1" stop-color="#D2D2D2"/></linearGradient><linearGradient id="cwr" x1="0" y1="0" x2="1" y2="1"><stop offset="0" stop-color="#D4D4D4"/><stop offset="1" stop-color="#A0A0A0"/></linearGradient></defs><path d="M8 0.4 L15.6 3.8 L8 7.3 L0.4 3.8 Z" fill="#F8F8F8"/><path d="M0.4 3.8 L8 7.3 L8 16 L0.8 12.4 Z" fill="url(#cwl)"/><path d="M15.6 3.8 L8 7.3 L8 16 L15.2 12.4 Z" fill="url(#cwr)"/></svg>
<div class="t" style="left:57.5px;top:432.07px;font-size:13.5px;letter-spacing:0.1px;color:#1A1A1A;">ReflectionProbes</div>
<svg class="a" style="left:37px;top:450px;" width="16" height="16" viewBox="0 0 16 16"><defs><linearGradient id="cwl" x1="0" y1="0" x2="0" y2="1"><stop offset="0" stop-color="#EEEEEE"/><stop offset="1" stop-color="#D2D2D2"/></linearGradient><linearGradient id="cwr" x1="0" y1="0" x2="1" y2="1"><stop offset="0" stop-color="#D4D4D4"/><stop offset="1" stop-color="#A0A0A0"/></linearGradient></defs><path d="M8 0.4 L15.6 3.8 L8 7.3 L0.4 3.8 Z" fill="#F8F8F8"/><path d="M0.4 3.8 L8 7.3 L8 16 L0.8 12.4 Z" fill="url(#cwl)"/><path d="M15.6 3.8 L8 7.3 L8 16 L15.2 12.4 Z" fill="url(#cwr)"/></svg>
<svg class="a" style="left:57.5px;top:457.5px;" width="39" height="2" viewBox="0 0 39 2"><rect x="0.00" y="0" width="5.3" height="1.5" fill="#333"/><rect x="7.70" y="0" width="5.3" height="1.5" fill="#333"/><rect x="15.40" y="0" width="5.3" height="1.5" fill="#333"/><rect x="23.10" y="0" width="5.3" height="1.5" fill="#333"/><rect x="30.80" y="0" width="5.3" height="1.5" fill="#333"/></svg>
<div class="t" style="left:100.3px;top:451.07px;font-size:13.5px;letter-spacing:-0.063px;color:#1A1A1A;">SpawnedPrefabs</div>
<svg class="a" style="left:207.8px;top:457.5px;" width="39" height="2" viewBox="0 0 39 2"><rect x="0.00" y="0" width="5.3" height="1.5" fill="#333"/><rect x="7.70" y="0" width="5.3" height="1.5" fill="#333"/><rect x="15.40" y="0" width="5.3" height="1.5" fill="#333"/><rect x="23.10" y="0" width="5.3" height="1.5" fill="#333"/><rect x="30.80" y="0" width="5.3" height="1.5" fill="#333"/></svg>
<div class="a" style="left:276px;top:85px;width:1338px;height:695px;background:#8C8C8C"></div>
<div class="tab" style="left:278px;top:66px;width:98px;height:20px;"></div>
<svg class="a" style="left:288px;top:67px;" width="15" height="16" viewBox="0 0 15 16"><g stroke="#C8C8C8" stroke-width="2.2"><path d="M5 0 V16 M10 0 V16 M0 5.5 H15 M0 10.5 H15"/></g><g stroke="#FFFFFF" stroke-width="1.2"><path d="M5 0 V16 M10 0 V16 M0 5.5 H15 M0 10.5 H15"/></g></svg>
<div class="t" style="left:306px;top:68.57px;font-size:13.5px;letter-spacing:-0.569px;color:#222;">Scene</div>
<svg class="a" style="left:387px;top:68px;" width="13" height="14" viewBox="0 0 13 14"><path d="M1 4.5 L11 3.5 L12 12.5 L2 13.5 Z" fill="#7A7A7A" stroke="#444" stroke-width="1"/><path d="M3.5 4.5 Q3.5 1 6 1 Q8.5 1 8.8 4" fill="none" stroke="#444" stroke-width="1.1"/><path d="M1 4.5 L11 3.5" stroke="#AAA"/></svg>
<div class="t" style="left:404px;top:68.57px;font-size:13.5px;letter-spacing:0.072px;color:#222;">Asset Store</div>
<svg class="a" style="left:518px;top:69px;" width="15" height="14" viewBox="0 0 15 14"><circle cx="3.5" cy="3.5" r="2.7" fill="none" stroke="#444" stroke-width="1.5"/><circle cx="10.5" cy="3.5" r="2.7" fill="none" stroke="#444" stroke-width="1.5"/><circle cx="10.5" cy="10.5" r="2.7" fill="none" stroke="#444" stroke-width="1.5"/><path d="M1 7 L6 10 L1 13Z" fill="#fff" stroke="#555" stroke-width="0.8"/></svg>
<div class="t" style="left:537px;top:68.57px;font-size:13.5px;letter-spacing:0.655px;color:#222;">Animator</div>
<svg class="a" style="left:641px;top:69px;" width="12" height="12" viewBox="0 0 12 12"><path d="M10.5 3 A5 5 0 1 0 10.5 9 L6 6 Z" fill="#222"/></svg>
<div class="t" style="left:657px;top:68.57px;font-size:13.5px;letter-spacing:-0.12px;color:#222;">Game</div>
<svg class="a" style="left:1594px;top:74px;" width="18" height="9" viewBox="0 0 18 9"><path d="M0 2.5 L5 2.5 L2.5 5.5 Z" fill="#333"/><rect x="7" y="0" width="10" height="1.6" fill="#333"/><rect x="7" y="3" width="10" height="1.6" fill="#777"/><rect x="7" y="6" width="10" height="1.6" fill="#333"/></svg>
<div class="tbar" style="left:277px;top:85px;width:1336px;height:21px;"></div>
<div class="a" style="left:283px;top:85px;width:1px;height:20px;background:#A9A9A9"></div>
<div class="a" style="left:426px;top:85px;width:1px;height:20px;background:#A9A9A9"></div>
<div class="a" style="left:432px;top:85px;width:1px;height:20px;background:#A9A9A9"></div>
<div class="a" style="left:460px;top:85px;width:1px;height:20px;background:#A9A9A9"></div>
<div class="a" style="left:466px;top:85px;width:1px;height:20px;background:#A9A9A9"></div>
<div class="a" style="left:498px;top:85px;width:1px;height:20px;background:#A9A9A9"></div>
<div class="a" style="left:528px;top:85px;width:1px;height:20px;background:#A9A9A9"></div>
<div class="a" style="left:566px;top:85px;width:1px;height:20px;background:#A9A9A9"></div>
<div class="a" style="left:573px;top:85px;width:1px;height:20px;background:#A9A9A9"></div>
<div class="t" style="left:290.5px;top:89.77px;font-size:11.5px;letter-spacing:-0.549px;color:#222;">Shaded</div>
<div class="caret" style="left:416px;top:94px;border-top-color:#444"></div>
<div class="t" style="left:439px;top:89.77px;font-size:11.5px;letter-spacing:-0.2px;color:#222;">2D</div>
<div class="a" style="left:467px;top:86px;width:31px;height:19px;background:#FAFAFA"></div>
<svg class="a" style="left:474px;top:88px;" width="16" height="16" viewBox="0 0 16 16"><circle cx="8" cy="8" r="3" fill="none" stroke="#333" stroke-width="1.2"/><g stroke="#333" stroke-width="1.1"><path d="M8 0.5V3 M8 13V15.5 M0.5 8H3 M13 8H15.5 M2.7 2.7L4.5 4.5 M11.5 11.5L13.3 13.3 M13.3 2.7L11.5 4.5 M4.5 11.5L2.7 13.3"/></g></svg>
<svg class="a" style="left:503px;top:88px;" width="20" height="16" viewBox="0 0 20 16"><path d="M1 5.5 H4 L8.5 2 V14 L4 10.5 H1 Z" fill="#9A9A9A" stroke="#555" stroke-width="1"/><path d="M11 5 Q13 8 11 11 M13.5 3.5 Q16.5 8 13.5 12.5" fill="none" stroke="#555" stroke-width="1.5"/></svg>
<svg class="a" style="left:538px;top:89px;" width="15" height="12" viewBox="0 0 15 12"><rect x="0.5" y="0.5" width="14" height="11" fill="#F4F4F4" stroke="#222" stroke-width="1.2"/><path d="M1 11.5 L1 7 L4 5 L7 7.5 L10 5.5 L14 8 L14 11.5 Z" fill="#222"/></svg>
<div class="caret" style="left:563px;top:93px;border-top-color:#444"></div>
<div class="a" style="left:1292px;top:85px;width:1px;height:20px;background:#A9A9A9"></div>
<div class="a" style="left:1353px;top:85px;width:1px;height:20px;background:#A9A9A9"></div>
<div class="t" style="left:1299.7px;top:89.77px;font-size:11.5px;letter-spacing:-0.155px;color:#222;">Gizmos</div>
<div class="caret" style="left:1342px;top:94px;border-top-color:#444"></div>
<div class="a" style="left:1362px;top:87px;width:244px;height:16px;border:1px solid #5A5A5A;border-top-color:#2E2E2E;border-radius:8px;background:linear-gradient(#D0D0D0,#DCDCDC 30%,#DCDCDC)"></div>
<svg class="a" style="left:1367px;top:90.5px;" width="14" height="10" viewBox="0 0 14 10"><circle cx="4" cy="4" r="2.8" fill="none" stroke="#666" stroke-width="1.1"/><path d="M6 6 L8.5 8.8" stroke="#666" stroke-width="1.3"/><path d="M8 2.5 L12 2.5 L10 5 Z" fill="#666"/></svg>
<div class="t" style="left:1381.6px;top:89.04px;font-size:12px;letter-spacing:-0.468px;color:#8A8A8A;">All</div>
<svg class="a" style="left:278px;top:106px;overflow:hidden" width="1334" height="672" viewBox="0 0 1334 672"><defs><linearGradient id="s0" gradientUnits="userSpaceOnUse" x1="0" y1="0" x2="0" y2="672" gradientTransform="matrix(1 -0.06106 0 1 0 0.733)"><stop offset="0.00000" stop-color="#D0E6F8"/><stop offset="0.03274" stop-color="#DFF3FD"/><stop offset="0.06250" stop-color="#EEFAFE"/><stop offset="0.08036" stop-color="#F8FFFF"/><stop offset="0.09345" stop-color="#EFFBFB"/><stop offset="0.10655" stop-color="#DDE9E8"/><stop offset="0.12402" stop-color="#C3CCCC"/><stop offset="0.14148" stop-color="#A6ACAC"/><stop offset="0.15458" stop-color="#8D8F8F"/><stop offset="0.16331" stop-color="#767472"/><stop offset="0.16767" stop-color="#6A6663"/><stop offset="0.17363" stop-color="#67625E"/></linearGradient><linearGradient id="s1" gradientUnits="userSpaceOnUse" x1="0" y1="0" x2="0" y2="672" gradientTransform="matrix(1 -0.05900 0 1 0 2.124)"><stop offset="0.00000" stop-color="#D0E6F8"/><stop offset="0.03274" stop-color="#DFF3FD"/><stop offset="0.06250" stop-color="#EEFAFE"/><stop offset="0.08036" stop-color="#F8FFFF"/><stop offset="0.09313" stop-color="#EFFBFB"/><stop offset="0.10591" stop-color="#DDE9E8"/><stop offset="0.12294" stop-color="#C3CCCC"/><stop offset="0.13998" stop-color="#A6ACAC"/><stop offset="0.15275" stop-color="#8D8F8F"/><stop offset="0.16127" stop-color="#767472"/><stop offset="0.16553" stop-color="#6A6663"/><stop offset="0.17148" stop-color="#67625E"/></linearGradient><linearGradient id="s2" gradientUnits="userSpaceOnUse" x1="0" y1="0" x2="0" y2="672" gradientTransform="matrix(1 -0.05693 0 1 0 3.416)"><stop offset="0.00000" stop-color="#D0E6F8"/><stop offset="0.03274" stop-color="#DFF3FD"/><stop offset="0.06250" stop-color="#EEFAFE"/><stop offset="0.08036" stop-color="#F8FFFF"/><stop offset="0.09282" stop-color="#EFFBFB"/><stop offset="0.10529" stop-color="#DDE9E8"/><stop offset="0.12191" stop-color="#C3CCCC"/><stop offset="0.13853" stop-color="#A6ACAC"/><stop offset="0.15099" stop-color="#8D8F8F"/><stop offset="0.15930" stop-color="#767472"/><stop offset="0.16346" stop-color="#6A6663"/><stop offset="0.16941" stop-color="#67625E"/></linearGradient><linearGradient id="s3" gradientUnits="userSpaceOnUse" x1="0" y1="0" x2="0" y2="672" gradientTransform="matrix(1 -0.05487 0 1 0 4.609)"><stop offset="0.00000" stop-color="#CFE5F8"/><stop offset="0.03274" stop-color="#DFF3FD"/><stop offset="0.06250" stop-color="#EEFAFE"/><stop offset="0.08036" stop-color="#F8FFFF"/><stop offset="0.09252" stop-color="#EFFBFB"/><stop offset="0.10469" stop-color="#DDE9E8"/><stop offset="0.12091" stop-color="#C3CCCC"/><stop offset="0.13713" stop-color="#A6ACAC"/><stop offset="0.14930" stop-color="#8D8F8F"/><stop offset="0.15741" stop-color="#767472"/><stop offset="0.16146" stop-color="#6A6663"/><stop offset="0.16742" stop-color="#67625E"/></linearGradient><linearGradient id="s4" gradientUnits="userSpaceOnUse" x1="0" y1="0" x2="0" y2="672" gradientTransform="matrix(1 -0.05280 0 1 0 5.703)"><stop offset="0.00000" stop-color="#CFE5F7"/><stop offset="0.03274" stop-color="#DFF3FD"/><stop offset="0.06250" stop-color="#EEFAFE"/><stop offset="0.08036" stop-color="#F8FFFF"/><stop offset="0.09223" stop-color="#EFFBFB"/><stop offset="0.10411" stop-color="#DDE9E8"/><stop offset="0.11995" stop-color="#C3CCCC"/><stop offset="0.13579" stop-color="#A6ACAC"/><stop offset="0.14766" stop-color="#8D8F8F"/><stop offset="0.15558" stop-color="#767472"/><stop offset="0.15954" stop-color="#6A6663"/><stop offset="0.16549" stop-color="#67625E"/></linearGradient><linearGradient id="s5" gradientUnits="userSpaceOnUse" x1="0" y1="0" x2="0" y2="672" gradientTransform="matrix(1 -0.05074 0 1 0 6.698)"><stop offset="0.00000" stop-color="#CFE5F7"/><stop offset="0.03274" stop-color="#DEF2FD"/><stop offset="0.06250" stop-color="#EDFAFE"/><stop offset="0.08036" stop-color="#F7FFFF"/><stop offset="0.09196" stop-color="#EFFBFB"/><stop offset="0.10356" stop-color="#DDE9E8"/><stop offset="0.11902" stop-color="#C3CCCC"/><stop offset="0.13449" stop-color="#A6ACAC"/><stop offset="0.14609" stop-color="#8D8F8F"/><stop offset="0.15382" stop-color="#767472"/><stop offset="0.15769" stop-color="#6A6663"/><stop offset="0.16364" stop-color="#67625E"/></linearGradient><linearGradient id="s6" gradientUnits="userSpaceOnUse" x1="0" y1="0" x2="0" y2="672" gradientTransform="matrix(1 -0.04868 0 1 0 7.593)"><stop offset="0.00000" stop-color="#CFE5F7"/><stop offset="0.03274" stop-color="#DEF2FC"/><stop offset="0.06250" stop-color="#EDFAFE"/><stop offset="0.08036" stop-color="#F7FFFF"/><stop offset="0.09169" stop-color="#EFFBFB"/><stop offset="0.10302" stop-color="#DDE9E8"/><stop offset="0.11814" stop-color="#C3CCCC"/><stop offset="0.13325" stop-color="#A6ACAC"/><stop offset="0.14458" stop-color="#8D8F8F"/><stop offset="0.15214" stop-color="#767472"/><stop offset="0.15592" stop-color="#6A6663"/><stop offset="0.16187" stop-color="#67625E"/></linearGradient><linearGradient id="s7" gradientUnits="userSpaceOnUse" x1="0" y1="0" x2="0" y2="672" gradientTransform="matrix(1 -0.04661 0 1 0 8.390)"><stop offset="0.00000" stop-color="#CEE5F7"/><stop offset="0.03274" stop-color="#DEF2FC"/><stop offset="0.06250" stop-color="#EDFAFE"/><stop offset="0.08036" stop-color="#F7FFFF"/><stop offset="0.09144" stop-color="#EFFBFB"/><stop offset="0.10251" stop-color="#DDE9E8"/><stop offset="0.11729" stop-color="#C3CCCC"/><stop offset="0.13206" stop-color="#A6ACAC"/><stop offset="0.14314" stop-color="#8D8F8F"/><stop offset="0.15052" stop-color="#767472"/><stop offset="0.15421" stop-color="#6A6663"/><stop offset="0.16017" stop-color="#67625E"/></linearGradient><linearGradient id="s8" gradientUnits="userSpaceOnUse" x1="0" y1="0" x2="0" y2="672" gradientTransform="matrix(1 -0.04455 0 1 0 9.088)"><stop offset="0.00000" stop-color="#CEE4F7"/><stop offset="0.03274" stop-color="#DEF2FC"/><stop offset="0.06250" stop-color="#EDF9FE"/><stop offset="0.08036" stop-color="#F7FEFF"/><stop offset="0.09119" stop-color="#EFFBFB"/><stop offset="0.10203" stop-color="#DDE9E8"/><stop offset="0.11647" stop-color="#C3CCCC"/><stop offset="0.13092" stop-color="#A6ACAC"/><stop offset="0.14175" stop-color="#8D8F8F"/><stop offset="0.14897" stop-color="#767472"/><stop offset="0.15259" stop-color="#6A6663"/><stop offset="0.15854" stop-color="#67625E"/></linearGradient><linearGradient id="s9" gradientUnits="userSpaceOnUse" x1="0" y1="0" x2="0" y2="672" gradientTransform="matrix(1 -0.04248 0 1 0 9.686)"><stop offset="0.00000" stop-color="#CEE4F6"/><stop offset="0.03274" stop-color="#DEF2FC"/><stop offset="0.06250" stop-color="#EDF9FE"/><stop offset="0.08036" stop-color="#F7FEFF"/><stop offset="0.09096" stop-color="#EFFBFB"/><stop offset="0.10156" stop-color="#DDE9E8"/><stop offset="0.11569" stop-color="#C3CCCC"/><stop offset="0.12983" stop-color="#A6ACAC"/><stop offset="0.14043" stop-color="#8D8F8F"/><stop offset="0.14750" stop-color="#767472"/><stop offset="0.15103" stop-color="#6A6663"/><stop offset="0.15698" stop-color="#67625E"/></linearGradient><linearGradient id="s10" gradientUnits="userSpaceOnUse" x1="0" y1="0" x2="0" y2="672" gradientTransform="matrix(1 -0.04042 0 1 0 10.186)"><stop offset="0.00000" stop-color="#CEE4F6"/><stop offset="0.03274" stop-color="#DEF2FC"/><stop offset="0.06250" stop-color="#ECF9FD"/><stop offset="0.08036" stop-color="#F6FEFE"/><stop offset="0.09074" stop-color="#EFFBFB"/><stop offset="0.10112" stop-color="#DDE9E8"/><stop offset="0.11495" stop-color="#C3CCCC"/><stop offset="0.12879" stop-color="#A6ACAC"/><stop offset="0.13917" stop-color="#8D8F8F"/><stop offset="0.14609" stop-color="#767472"/><stop offset="0.14955" stop-color="#6A6663"/><stop offset="0.15550" stop-color="#67625E"/></linearGradient><linearGradient id="s11" gradientUnits="userSpaceOnUse" x1="0" y1="0" x2="0" y2="672" gradientTransform="matrix(1 -0.03836 0 1 0 10.586)"><stop offset="0.00000" stop-color="#CDE3F6"/><stop offset="0.03274" stop-color="#DDF2FC"/><stop offset="0.06250" stop-color="#ECF9FD"/><stop offset="0.08036" stop-color="#F6FEFE"/><stop offset="0.09053" stop-color="#EFFBFB"/><stop offset="0.10069" stop-color="#DDE9E8"/><stop offset="0.11425" stop-color="#C3CCCC"/><stop offset="0.12781" stop-color="#A6ACAC"/><stop offset="0.13798" stop-color="#8D8F8F"/><stop offset="0.14476" stop-color="#767472"/><stop offset="0.14814" stop-color="#6A6663"/><stop offset="0.15410" stop-color="#67625E"/></linearGradient><linearGradient id="s12" gradientUnits="userSpaceOnUse" x1="0" y1="0" x2="0" y2="672" gradientTransform="matrix(1 -0.03629 0 1 0 10.888)"><stop offset="0.00000" stop-color="#CDE3F6"/><stop offset="0.03274" stop-color="#DDF1FC"/><stop offset="0.06250" stop-color="#ECF9FD"/><stop offset="0.08036" stop-color="#F6FEFE"/><stop offset="0.09033" stop-color="#EFFBFB"/><stop offset="0.10029" stop-color="#DDE9E8"/><stop offset="0.11358" stop-color="#C3CCCC"/><stop offset="0.12688" stop-color="#A6ACAC"/><stop offset="0.13684" stop-color="#8D8F8F"/><stop offset="0.14349" stop-color="#767472"/><stop offset="0.14681" stop-color="#6A6663"/><stop offset="0.15276" stop-color="#67625E"/></linearGradient><linearGradient id="s13" gradientUnits="userSpaceOnUse" x1="0" y1="0" x2="0" y2="672" gradientTransform="matrix(1 -0.03423 0 1 0 11.090)"><stop offset="0.00000" stop-color="#CDE3F5"/><stop offset="0.03274" stop-color="#DDF1FC"/><stop offset="0.06250" stop-color="#ECF9FD"/><stop offset="0.08036" stop-color="#F6FEFE"/><stop offset="0.09014" stop-color="#EFFBFB"/><stop offset="0.09992" stop-color="#DDE9E8"/><stop offset="0.11295" stop-color="#C3CCCC"/><stop offset="0.12599" stop-color="#A6ACAC"/><stop offset="0.13577" stop-color="#8D8F8F"/><stop offset="0.14229" stop-color="#767472"/><stop offset="0.14555" stop-color="#6A6663"/><stop offset="0.15151" stop-color="#67625E"/></linearGradient><linearGradient id="s14" gradientUnits="userSpaceOnUse" x1="0" y1="0" x2="0" y2="672" gradientTransform="matrix(1 -0.03216 0 1 0 11.193)"><stop offset="0.00000" stop-color="#CCE3F5"/><stop offset="0.03274" stop-color="#DDF1FB"/><stop offset="0.06250" stop-color="#EBF9FD"/><stop offset="0.08036" stop-color="#F5FEFE"/><stop offset="0.08996" stop-color="#EFFBFB"/><stop offset="0.09956" stop-color="#DDE9E8"/><stop offset="0.11236" stop-color="#C3CCCC"/><stop offset="0.12516" stop-color="#A6ACAC"/><stop offset="0.13477" stop-color="#8D8F8F"/><stop offset="0.14117" stop-color="#767472"/><stop offset="0.14437" stop-color="#6A6663"/><stop offset="0.15032" stop-color="#67625E"/></linearGradient><linearGradient id="s15" gradientUnits="userSpaceOnUse" x1="0" y1="0" x2="0" y2="672" gradientTransform="matrix(1 -0.03010 0 1 0 11.197)"><stop offset="0.00000" stop-color="#CCE2F5"/><stop offset="0.03274" stop-color="#DDF1FB"/><stop offset="0.06250" stop-color="#EBF9FD"/><stop offset="0.08036" stop-color="#F5FEFE"/><stop offset="0.08979" stop-color="#EFFBFB"/><stop offset="0.09923" stop-color="#DDE9E8"/><stop offset="0.11181" stop-color="#C3CCCC"/><stop offset="0.12439" stop-color="#A6ACAC"/><stop offset="0.13382" stop-color="#8D8F8F"/><stop offset="0.14011" stop-color="#767472"/><stop offset="0.14326" stop-color="#6A6663"/><stop offset="0.14921" stop-color="#67625E"/></linearGradient><linearGradient id="s16" gradientUnits="userSpaceOnUse" x1="0" y1="0" x2="0" y2="672" gradientTransform="matrix(1 -0.02804 0 1 0 11.102)"><stop offset="0.00000" stop-color="#CCE2F5"/><stop offset="0.03274" stop-color="#DCF1FB"/><stop offset="0.06250" stop-color="#EBF9FD"/><stop offset="0.08036" stop-color="#F5FEFE"/><stop offset="0.08964" stop-color="#EFFBFB"/><stop offset="0.09892" stop-color="#DDE9E8"/><stop offset="0.11129" stop-color="#C3CCCC"/><stop offset="0.12366" stop-color="#A6ACAC"/><stop offset="0.13294" stop-color="#8D8F8F"/><stop offset="0.13912" stop-color="#767472"/><stop offset="0.14222" stop-color="#6A6663"/><stop offset="0.14817" stop-color="#67625E"/></linearGradient><linearGradient id="s17" gradientUnits="userSpaceOnUse" x1="0" y1="0" x2="0" y2="672" gradientTransform="matrix(1 -0.02597 0 1 0 10.908)"><stop offset="0.00000" stop-color="#CBE2F4"/><stop offset="0.03274" stop-color="#DCF1FB"/><stop offset="0.06250" stop-color="#EAF8FD"/><stop offset="0.08036" stop-color="#F4FDFE"/><stop offset="0.08949" stop-color="#EFFBFB"/><stop offset="0.09863" stop-color="#DDE9E8"/><stop offset="0.11080" stop-color="#C3CCCC"/><stop offset="0.12298" stop-color="#A6ACAC"/><stop offset="0.13212" stop-color="#8D8F8F"/><stop offset="0.13821" stop-color="#767472"/><stop offset="0.14125" stop-color="#6A6663"/><stop offset="0.14721" stop-color="#67625E"/></linearGradient><linearGradient id="s18" gradientUnits="userSpaceOnUse" x1="0" y1="0" x2="0" y2="672" gradientTransform="matrix(1 -0.02391 0 1 0 10.615)"><stop offset="0.00000" stop-color="#CBE1F4"/><stop offset="0.03274" stop-color="#DCF0FB"/><stop offset="0.06250" stop-color="#EAF8FD"/><stop offset="0.08036" stop-color="#F4FDFE"/><stop offset="0.08936" stop-color="#EFFBFB"/><stop offset="0.09836" stop-color="#DDE9E8"/><stop offset="0.11036" stop-color="#C3CCCC"/><stop offset="0.12236" stop-color="#A6ACAC"/><stop offset="0.13136" stop-color="#8D8F8F"/><stop offset="0.13736" stop-color="#767472"/><stop offset="0.14036" stop-color="#6A6663"/><stop offset="0.14631" stop-color="#67625E"/></linearGradient><linearGradient id="s19" gradientUnits="userSpaceOnUse" x1="0" y1="0" x2="0" y2="672" gradientTransform="matrix(1 -0.02184 0 1 0 10.223)"><stop offset="0.00000" stop-color="#CBE1F4"/><stop offset="0.03274" stop-color="#DCF0FB"/><stop offset="0.06250" stop-color="#EAF8FD"/><stop offset="0.08036" stop-color="#F4FDFE"/><stop offset="0.08924" stop-color="#EFFBFB"/><stop offset="0.09811" stop-color="#DDE9E8"/><stop offset="0.10995" stop-color="#C3CCCC"/><stop offset="0.12179" stop-color="#A6ACAC"/><stop offset="0.13067" stop-color="#8D8F8F"/><stop offset="0.13659" stop-color="#767472"/><stop offset="0.13954" stop-color="#6A6663"/><stop offset="0.14550" stop-color="#67625E"/></linearGradient><linearGradient id="s20" gradientUnits="userSpaceOnUse" x1="0" y1="0" x2="0" y2="672" gradientTransform="matrix(1 -0.01978 0 1 0 9.732)"><stop offset="0.00000" stop-color="#CAE1F4"/><stop offset="0.03274" stop-color="#DBF0FB"/><stop offset="0.06250" stop-color="#EAF8FC"/><stop offset="0.08036" stop-color="#F4FDFD"/><stop offset="0.08912" stop-color="#EFFBFB"/><stop offset="0.09789" stop-color="#DDE9E8"/><stop offset="0.10958" stop-color="#C3CCCC"/><stop offset="0.12127" stop-color="#A6ACAC"/><stop offset="0.13003" stop-color="#8D8F8F"/><stop offset="0.13588" stop-color="#767472"/><stop offset="0.13880" stop-color="#6A6663"/><stop offset="0.14475" stop-color="#67625E"/></linearGradient><linearGradient id="s21" gradientUnits="userSpaceOnUse" x1="0" y1="0" x2="0" y2="672" gradientTransform="matrix(1 -0.01772 0 1 0 9.141)"><stop offset="0.00000" stop-color="#CAE0F3"/><stop offset="0.03274" stop-color="#DBF0FA"/><stop offset="0.06250" stop-color="#E9F8FC"/><stop offset="0.08036" stop-color="#F3FDFD"/><stop offset="0.08902" stop-color="#EFFBFB"/><stop offset="0.09769" stop-color="#DDE9E8"/><stop offset="0.10924" stop-color="#C3CCCC"/><stop offset="0.12080" stop-color="#A6ACAC"/><stop offset="0.12947" stop-color="#8D8F8F"/><stop offset="0.13524" stop-color="#767472"/><stop offset="0.13813" stop-color="#6A6663"/><stop offset="0.14408" stop-color="#67625E"/></linearGradient><linearGradient id="s22" gradientUnits="userSpaceOnUse" x1="0" y1="0" x2="0" y2="672" gradientTransform="matrix(1 -0.01565 0 1 0 8.452)"><stop offset="0.00000" stop-color="#CAE0F3"/><stop offset="0.03274" stop-color="#DBF0FA"/><stop offset="0.06250" stop-color="#E9F8FC"/><stop offset="0.08036" stop-color="#F3FDFD"/><stop offset="0.08893" stop-color="#EFFBFB"/><stop offset="0.09751" stop-color="#DDE9E8"/><stop offset="0.10895" stop-color="#C3CCCC"/><stop offset="0.12038" stop-color="#A6ACAC"/><stop offset="0.12896" stop-color="#8D8F8F"/><stop offset="0.13468" stop-color="#767472"/><stop offset="0.13754" stop-color="#6A6663"/><stop offset="0.14349" stop-color="#67625E"/></linearGradient><linearGradient id="s23" gradientUnits="userSpaceOnUse" x1="0" y1="0" x2="0" y2="672" gradientTransform="matrix(1 -0.01359 0 1 0 7.664)"><stop offset="0.00000" stop-color="#C9DFF3"/><stop offset="0.03274" stop-color="#DBEFFA"/><stop offset="0.06250" stop-color="#E9F7FC"/><stop offset="0.08036" stop-color="#F3FDFD"/><stop offset="0.08886" stop-color="#EFFBFB"/><stop offset="0.09735" stop-color="#DDE9E8"/><stop offset="0.10869" stop-color="#C3CCCC"/><stop offset="0.12002" stop-color="#A6ACAC"/><stop offset="0.12852" stop-color="#8D8F8F"/><stop offset="0.13418" stop-color="#767472"/><stop offset="0.13701" stop-color="#6A6663"/><stop offset="0.14297" stop-color="#67625E"/></linearGradient><linearGradient id="s24" gradientUnits="userSpaceOnUse" x1="0" y1="0" x2="0" y2="672" gradientTransform="matrix(1 -0.01152 0 1 0 6.776)"><stop offset="0.00000" stop-color="#C9DFF2"/><stop offset="0.03274" stop-color="#DBEFFA"/><stop offset="0.06250" stop-color="#E9F7FC"/><stop offset="0.08036" stop-color="#F2FCFD"/><stop offset="0.08879" stop-color="#EFFBFB"/><stop offset="0.09722" stop-color="#DDE9E8"/><stop offset="0.10846" stop-color="#C3CCCC"/><stop offset="0.11970" stop-color="#A6ACAC"/><stop offset="0.12813" stop-color="#8D8F8F"/><stop offset="0.13376" stop-color="#767472"/><stop offset="0.13657" stop-color="#6A6663"/><stop offset="0.14252" stop-color="#67625E"/></linearGradient><linearGradient id="s25" gradientUnits="userSpaceOnUse" x1="0" y1="0" x2="0" y2="672" gradientTransform="matrix(1 -0.00946 0 1 0 5.790)"><stop offset="0.00000" stop-color="#C8DFF2"/><stop offset="0.03274" stop-color="#DAEFFA"/><stop offset="0.06250" stop-color="#E8F7FC"/><stop offset="0.08036" stop-color="#F2FCFD"/><stop offset="0.08873" stop-color="#EFFBFB"/><stop offset="0.09711" stop-color="#DDE9E8"/><stop offset="0.10827" stop-color="#C3CCCC"/><stop offset="0.11944" stop-color="#A6ACAC"/><stop offset="0.12782" stop-color="#8D8F8F"/><stop offset="0.13340" stop-color="#767472"/><stop offset="0.13619" stop-color="#6A6663"/><stop offset="0.14214" stop-color="#67625E"/></linearGradient><linearGradient id="s26" gradientUnits="userSpaceOnUse" x1="0" y1="0" x2="0" y2="672" gradientTransform="matrix(1 -0.00740 0 1 0 4.704)"><stop offset="0.00000" stop-color="#C8DEF2"/><stop offset="0.03274" stop-color="#DAEFFA"/><stop offset="0.06250" stop-color="#E8F7FC"/><stop offset="0.08036" stop-color="#F1FCFD"/><stop offset="0.08869" stop-color="#EFFBFB"/><stop offset="0.09702" stop-color="#DDE9E8"/><stop offset="0.10812" stop-color="#C3CCCC"/><stop offset="0.11923" stop-color="#A6ACAC"/><stop offset="0.12756" stop-color="#8D8F8F"/><stop offset="0.13311" stop-color="#767472"/><stop offset="0.13589" stop-color="#6A6663"/><stop offset="0.14184" stop-color="#67625E"/></linearGradient><linearGradient id="s27" gradientUnits="userSpaceOnUse" x1="0" y1="0" x2="0" y2="672" gradientTransform="matrix(1 -0.00533 0 1 0 3.519)"><stop offset="0.00000" stop-color="#C8DEF2"/><stop offset="0.03274" stop-color="#DAEFF9"/><stop offset="0.06250" stop-color="#E8F7FB"/><stop offset="0.08036" stop-color="#F1FCFD"/><stop offset="0.08865" stop-color="#EFFBFB"/><stop offset="0.09695" stop-color="#DDE9E8"/><stop offset="0.10801" stop-color="#C3CCCC"/><stop offset="0.11907" stop-color="#A6ACAC"/><stop offset="0.12737" stop-color="#8D8F8F"/><stop offset="0.13290" stop-color="#767472"/><stop offset="0.13566" stop-color="#6A6663"/><stop offset="0.14162" stop-color="#67625E"/></linearGradient><linearGradient id="s28" gradientUnits="userSpaceOnUse" x1="0" y1="0" x2="0" y2="672" gradientTransform="matrix(1 -0.00327 0 1 0 2.235)"><stop offset="0.00000" stop-color="#C7DEF1"/><stop offset="0.03274" stop-color="#DAEEF9"/><stop offset="0.06250" stop-color="#E8F6FB"/><stop offset="0.08036" stop-color="#F1FCFC"/><stop offset="0.08863" stop-color="#EFFBFB"/><stop offset="0.09690" stop-color="#DDE9E8"/><stop offset="0.10793" stop-color="#C3CCCC"/><stop offset="0.11896" stop-color="#A6ACAC"/><stop offset="0.12724" stop-color="#8D8F8F"/><stop offset="0.13275" stop-color="#767472"/><stop offset="0.13551" stop-color="#6A6663"/><stop offset="0.14146" stop-color="#67625E"/></linearGradient><linearGradient id="s29" gradientUnits="userSpaceOnUse" x1="0" y1="0" x2="0" y2="672" gradientTransform="matrix(1 -0.00120 0 1 0 0.852)"><stop offset="0.00000" stop-color="#C7DDF1"/><stop offset="0.03274" stop-color="#D9EEF9"/><stop offset="0.06250" stop-color="#E7F6FB"/><stop offset="0.08036" stop-color="#F0FCFC"/><stop offset="0.08862" stop-color="#EFFBFB"/><stop offset="0.09688" stop-color="#DDE9E8"/><stop offset="0.10789" stop-color="#C3CCCC"/><stop offset="0.11891" stop-color="#A6ACAC"/><stop offset="0.12717" stop-color="#8D8F8F"/><stop offset="0.13268" stop-color="#767472"/><stop offset="0.13543" stop-color="#6A6663"/><stop offset="0.14138" stop-color="#67625E"/></linearGradient><linearGradient id="s30" gradientUnits="userSpaceOnUse" x1="0" y1="0" x2="0" y2="672" gradientTransform="matrix(1 0.00086 0 1 0 -0.630)"><stop offset="0.00000" stop-color="#C6DDF1"/><stop offset="0.03274" stop-color="#D9EEF9"/><stop offset="0.06250" stop-color="#E7F6FB"/><stop offset="0.08036" stop-color="#F0FBFC"/><stop offset="0.08862" stop-color="#EFFBFB"/><stop offset="0.09688" stop-color="#DDE9E8"/><stop offset="0.10789" stop-color="#C3CCCC"/><stop offset="0.11890" stop-color="#A6ACAC"/><stop offset="0.12716" stop-color="#8D8F8F"/><stop offset="0.13267" stop-color="#767472"/><stop offset="0.13542" stop-color="#6A6663"/><stop offset="0.14138" stop-color="#67625E"/></linearGradient><linearGradient id="s31" gradientUnits="userSpaceOnUse" x1="0" y1="0" x2="0" y2="672" gradientTransform="matrix(1 0.00292 0 1 0 -2.211)"><stop offset="0.00000" stop-color="#C6DCF0"/><stop offset="0.03274" stop-color="#D9EEF9"/><stop offset="0.06250" stop-color="#E6F6FB"/><stop offset="0.08036" stop-color="#EFFBFC"/><stop offset="0.08863" stop-color="#EFFBFB"/><stop offset="0.09690" stop-color="#DDE9E8"/><stop offset="0.10792" stop-color="#C3CCCC"/><stop offset="0.11895" stop-color="#A6ACAC"/><stop offset="0.12722" stop-color="#8D8F8F"/><stop offset="0.13273" stop-color="#767472"/><stop offset="0.13549" stop-color="#6A6663"/><stop offset="0.14144" stop-color="#67625E"/></linearGradient><linearGradient id="s32" gradientUnits="userSpaceOnUse" x1="0" y1="0" x2="0" y2="672" gradientTransform="matrix(1 0.00499 0 1 0 -3.891)"><stop offset="0.00000" stop-color="#C6DCF0"/><stop offset="0.03274" stop-color="#D9EEF9"/><stop offset="0.06250" stop-color="#E6F6FB"/><stop offset="0.08036" stop-color="#EFFBFC"/><stop offset="0.08865" stop-color="#EFFBFB"/><stop offset="0.09694" stop-color="#DDE9E8"/><stop offset="0.10799" stop-color="#C3CCCC"/><stop offset="0.11905" stop-color="#A6ACAC"/><stop offset="0.12734" stop-color="#8D8F8F"/><stop offset="0.13287" stop-color="#767472"/><stop offset="0.13563" stop-color="#6A6663"/><stop offset="0.14158" stop-color="#67625E"/></linearGradient><linearGradient id="s33" gradientUnits="userSpaceOnUse" x1="0" y1="0" x2="0" y2="672" gradientTransform="matrix(1 0.00705 0 1 0 -5.670)"><stop offset="0.00000" stop-color="#C5DCF0"/><stop offset="0.03274" stop-color="#D8EDF8"/><stop offset="0.06250" stop-color="#E6F5FA"/><stop offset="0.08036" stop-color="#EFFBFC"/><stop offset="0.08868" stop-color="#EFFBFB"/><stop offset="0.09700" stop-color="#DDE9E8"/><stop offset="0.10810" stop-color="#C3CCCC"/><stop offset="0.11920" stop-color="#A6ACAC"/><stop offset="0.12752" stop-color="#8D8F8F"/><stop offset="0.13307" stop-color="#767472"/><stop offset="0.13585" stop-color="#6A6663"/><stop offset="0.14180" stop-color="#67625E"/></linearGradient><linearGradient id="s34" gradientUnits="userSpaceOnUse" x1="0" y1="0" x2="0" y2="672" gradientTransform="matrix(1 0.00912 0 1 0 -7.548)"><stop offset="0.00000" stop-color="#C5DBEF"/><stop offset="0.03274" stop-color="#D8EDF8"/><stop offset="0.06250" stop-color="#E5F5FA"/><stop offset="0.08036" stop-color="#EEFBFC"/><stop offset="0.08872" stop-color="#EFFBFB"/><stop offset="0.09709" stop-color="#DDE9E8"/><stop offset="0.10825" stop-color="#C3CCCC"/><stop offset="0.11940" stop-color="#A6ACAC"/><stop offset="0.12777" stop-color="#8D8F8F"/><stop offset="0.13335" stop-color="#767472"/><stop offset="0.13614" stop-color="#6A6663"/><stop offset="0.14209" stop-color="#67625E"/></linearGradient><linearGradient id="s35" gradientUnits="userSpaceOnUse" x1="0" y1="0" x2="0" y2="672" gradientTransform="matrix(1 0.01118 0 1 0 -9.525)"><stop offset="0.00000" stop-color="#C4DBEF"/><stop offset="0.03274" stop-color="#D8EDF8"/><stop offset="0.06250" stop-color="#E5F5FA"/><stop offset="0.08036" stop-color="#EEFAFB"/><stop offset="0.08878" stop-color="#EFFBFB"/><stop offset="0.09720" stop-color="#DDE9E8"/><stop offset="0.10843" stop-color="#C3CCCC"/><stop offset="0.11966" stop-color="#A6ACAC"/><stop offset="0.12808" stop-color="#8D8F8F"/><stop offset="0.13369" stop-color="#767472"/><stop offset="0.13650" stop-color="#6A6663"/><stop offset="0.14245" stop-color="#67625E"/></linearGradient><linearGradient id="s36" gradientUnits="userSpaceOnUse" x1="0" y1="0" x2="0" y2="672" gradientTransform="matrix(1 0.01324 0 1 0 -11.602)"><stop offset="0.00000" stop-color="#C4DAEF"/><stop offset="0.03274" stop-color="#D7EDF8"/><stop offset="0.06250" stop-color="#E4F5FA"/><stop offset="0.08036" stop-color="#EDFAFB"/><stop offset="0.08884" stop-color="#EFFBFB"/><stop offset="0.09733" stop-color="#DDE9E8"/><stop offset="0.10865" stop-color="#C3CCCC"/><stop offset="0.11996" stop-color="#A6ACAC"/><stop offset="0.12845" stop-color="#8D8F8F"/><stop offset="0.13411" stop-color="#767472"/><stop offset="0.13693" stop-color="#6A6663"/><stop offset="0.14289" stop-color="#67625E"/></linearGradient><linearGradient id="s37" gradientUnits="userSpaceOnUse" x1="0" y1="0" x2="0" y2="672" gradientTransform="matrix(1 0.01531 0 1 0 -13.777)"><stop offset="0.00000" stop-color="#C3DAEE"/><stop offset="0.03274" stop-color="#D7ECF8"/><stop offset="0.06250" stop-color="#E4F4FA"/><stop offset="0.08036" stop-color="#EDFAFB"/><stop offset="0.08892" stop-color="#EFFBFB"/><stop offset="0.09748" stop-color="#DDE9E8"/><stop offset="0.10890" stop-color="#C3CCCC"/><stop offset="0.12032" stop-color="#A6ACAC"/><stop offset="0.12888" stop-color="#8D8F8F"/><stop offset="0.13459" stop-color="#767472"/><stop offset="0.13744" stop-color="#6A6663"/><stop offset="0.14340" stop-color="#67625E"/></linearGradient><linearGradient id="s38" gradientUnits="userSpaceOnUse" x1="0" y1="0" x2="0" y2="672" gradientTransform="matrix(1 0.01737 0 1 0 -16.052)"><stop offset="0.00000" stop-color="#C3DAEE"/><stop offset="0.03274" stop-color="#D7ECF7"/><stop offset="0.06250" stop-color="#E4F4F9"/><stop offset="0.08036" stop-color="#ECFAFB"/><stop offset="0.08901" stop-color="#EFFBFB"/><stop offset="0.09766" stop-color="#DDE9E8"/><stop offset="0.10919" stop-color="#C3CCCC"/><stop offset="0.12073" stop-color="#A6ACAC"/><stop offset="0.12938" stop-color="#8D8F8F"/><stop offset="0.13514" stop-color="#767472"/><stop offset="0.13803" stop-color="#6A6663"/><stop offset="0.14398" stop-color="#67625E"/></linearGradient><linearGradient id="s39" gradientUnits="userSpaceOnUse" x1="0" y1="0" x2="0" y2="672" gradientTransform="matrix(1 0.01944 0 1 0 -18.425)"><stop offset="0.00000" stop-color="#C3D9EE"/><stop offset="0.03274" stop-color="#D7ECF7"/><stop offset="0.06250" stop-color="#E4F4F9"/><stop offset="0.08036" stop-color="#ECFAFB"/><stop offset="0.08911" stop-color="#EFFBFB"/><stop offset="0.09786" stop-color="#DDE9E8"/><stop offset="0.10952" stop-color="#C3CCCC"/><stop offset="0.12119" stop-color="#A6ACAC"/><stop offset="0.12994" stop-color="#8D8F8F"/><stop offset="0.13577" stop-color="#767472"/><stop offset="0.13868" stop-color="#6A6663"/><stop offset="0.14464" stop-color="#67625E"/></linearGradient><linearGradient id="s40" gradientUnits="userSpaceOnUse" x1="0" y1="0" x2="0" y2="672" gradientTransform="matrix(1 0.02150 0 1 0 -20.898)"><stop offset="0.00000" stop-color="#C2D9ED"/><stop offset="0.03274" stop-color="#D6ECF7"/><stop offset="0.06250" stop-color="#E3F4F9"/><stop offset="0.08036" stop-color="#ECF9FB"/><stop offset="0.08922" stop-color="#EFFBFB"/><stop offset="0.09807" stop-color="#DDE9E8"/><stop offset="0.10989" stop-color="#C3CCCC"/><stop offset="0.12170" stop-color="#A6ACAC"/><stop offset="0.13056" stop-color="#8D8F8F"/><stop offset="0.13646" stop-color="#767472"/><stop offset="0.13942" stop-color="#6A6663"/><stop offset="0.14537" stop-color="#67625E"/></linearGradient><linearGradient id="s41" gradientUnits="userSpaceOnUse" x1="0" y1="0" x2="0" y2="672" gradientTransform="matrix(1 0.02356 0 1 0 -23.470)"><stop offset="0.00000" stop-color="#C2D8ED"/><stop offset="0.03274" stop-color="#D6EBF7"/><stop offset="0.06250" stop-color="#E3F3F9"/><stop offset="0.08036" stop-color="#EBF9FA"/><stop offset="0.08934" stop-color="#EFFBFB"/><stop offset="0.09832" stop-color="#DDE9E8"/><stop offset="0.11029" stop-color="#C3CCCC"/><stop offset="0.12226" stop-color="#A6ACAC"/><stop offset="0.13124" stop-color="#8D8F8F"/><stop offset="0.13723" stop-color="#767472"/><stop offset="0.14022" stop-color="#6A6663"/><stop offset="0.14617" stop-color="#67625E"/></linearGradient><linearGradient id="s42" gradientUnits="userSpaceOnUse" x1="0" y1="0" x2="0" y2="672" gradientTransform="matrix(1 0.02563 0 1 0 -26.141)"><stop offset="0.00000" stop-color="#C1D8ED"/><stop offset="0.03274" stop-color="#D6EBF7"/><stop offset="0.06250" stop-color="#E3F3F9"/><stop offset="0.08036" stop-color="#EBF9FA"/><stop offset="0.08947" stop-color="#EFFBFB"/><stop offset="0.09858" stop-color="#DDE9E8"/><stop offset="0.11073" stop-color="#C3CCCC"/><stop offset="0.12288" stop-color="#A6ACAC"/><stop offset="0.13199" stop-color="#8D8F8F"/><stop offset="0.13806" stop-color="#767472"/><stop offset="0.14110" stop-color="#6A6663"/><stop offset="0.14705" stop-color="#67625E"/></linearGradient><linearGradient id="s43" gradientUnits="userSpaceOnUse" x1="0" y1="0" x2="0" y2="672" gradientTransform="matrix(1 0.02769 0 1 0 -28.910)"><stop offset="0.00000" stop-color="#C1D7EC"/><stop offset="0.03274" stop-color="#D6EBF6"/><stop offset="0.06250" stop-color="#E2F3F8"/><stop offset="0.08036" stop-color="#EAF9FA"/><stop offset="0.08961" stop-color="#EFFBFB"/><stop offset="0.09887" stop-color="#DDE9E8"/><stop offset="0.11120" stop-color="#C3CCCC"/><stop offset="0.12354" stop-color="#A6ACAC"/><stop offset="0.13280" stop-color="#8D8F8F"/><stop offset="0.13897" stop-color="#767472"/><stop offset="0.14205" stop-color="#6A6663"/><stop offset="0.14800" stop-color="#67625E"/></linearGradient><linearGradient id="s44" gradientUnits="userSpaceOnUse" x1="0" y1="0" x2="0" y2="672" gradientTransform="matrix(1 0.02976 0 1 0 -31.779)"><stop offset="0.00000" stop-color="#C0D7EC"/><stop offset="0.03274" stop-color="#D5EBF6"/><stop offset="0.06250" stop-color="#E2F3F8"/><stop offset="0.08036" stop-color="#EAF9FA"/><stop offset="0.08977" stop-color="#EFFBFB"/><stop offset="0.09917" stop-color="#DDE9E8"/><stop offset="0.11172" stop-color="#C3CCCC"/><stop offset="0.12426" stop-color="#A6ACAC"/><stop offset="0.13367" stop-color="#8D8F8F"/><stop offset="0.13994" stop-color="#767472"/><stop offset="0.14308" stop-color="#6A6663"/><stop offset="0.14903" stop-color="#67625E"/></linearGradient><linearGradient id="s45" gradientUnits="userSpaceOnUse" x1="0" y1="0" x2="0" y2="672" gradientTransform="matrix(1 0.03182 0 1 0 -34.747)"><stop offset="0.00000" stop-color="#C0D7EC"/><stop offset="0.03274" stop-color="#D5EBF6"/><stop offset="0.06250" stop-color="#E1F3F8"/><stop offset="0.08036" stop-color="#E9F8FA"/><stop offset="0.08993" stop-color="#EFFBFB"/><stop offset="0.09950" stop-color="#DDE9E8"/><stop offset="0.11227" stop-color="#C3CCCC"/><stop offset="0.12503" stop-color="#A6ACAC"/><stop offset="0.13460" stop-color="#8D8F8F"/><stop offset="0.14099" stop-color="#767472"/><stop offset="0.14418" stop-color="#6A6663"/><stop offset="0.15013" stop-color="#67625E"/></linearGradient><linearGradient id="s46" gradientUnits="userSpaceOnUse" x1="0" y1="0" x2="0" y2="672" gradientTransform="matrix(1 0.03388 0 1 0 -37.815)"><stop offset="0.00000" stop-color="#BFD6EB"/><stop offset="0.03274" stop-color="#D5EAF6"/><stop offset="0.06250" stop-color="#E1F2F8"/><stop offset="0.08036" stop-color="#E9F8FA"/><stop offset="0.09011" stop-color="#EFFBFB"/><stop offset="0.09985" stop-color="#DDE9E8"/><stop offset="0.11285" stop-color="#C3CCCC"/><stop offset="0.12585" stop-color="#A6ACAC"/><stop offset="0.13560" stop-color="#8D8F8F"/><stop offset="0.14210" stop-color="#767472"/><stop offset="0.14535" stop-color="#6A6663"/><stop offset="0.15130" stop-color="#67625E"/></linearGradient><linearGradient id="s47" gradientUnits="userSpaceOnUse" x1="0" y1="0" x2="0" y2="672" gradientTransform="matrix(1 0.03595 0 1 0 -40.981)"><stop offset="0.00000" stop-color="#BFD6EB"/><stop offset="0.03274" stop-color="#D4EAF6"/><stop offset="0.06250" stop-color="#E0F2F8"/><stop offset="0.08036" stop-color="#E8F8F9"/><stop offset="0.09029" stop-color="#EFFBFB"/><stop offset="0.10023" stop-color="#DDE9E8"/><stop offset="0.11348" stop-color="#C3CCCC"/><stop offset="0.12672" stop-color="#A6ACAC"/><stop offset="0.13666" stop-color="#8D8F8F"/><stop offset="0.14328" stop-color="#767472"/><stop offset="0.14660" stop-color="#6A6663"/><stop offset="0.15255" stop-color="#67625E"/></linearGradient><linearGradient id="s48" gradientUnits="userSpaceOnUse" x1="0" y1="0" x2="0" y2="672" gradientTransform="matrix(1 0.03801 0 1 0 -44.246)"><stop offset="0.00000" stop-color="#BED5EB"/><stop offset="0.03274" stop-color="#D4EAF5"/><stop offset="0.06250" stop-color="#E0F2F7"/><stop offset="0.08036" stop-color="#E8F8F9"/><stop offset="0.09049" stop-color="#EFFBFB"/><stop offset="0.10063" stop-color="#DDE9E8"/><stop offset="0.11414" stop-color="#C3CCCC"/><stop offset="0.12765" stop-color="#A6ACAC"/><stop offset="0.13778" stop-color="#8D8F8F"/><stop offset="0.14454" stop-color="#767472"/><stop offset="0.14792" stop-color="#6A6663"/><stop offset="0.15387" stop-color="#67625E"/></linearGradient><linearGradient id="s49" gradientUnits="userSpaceOnUse" x1="0" y1="0" x2="0" y2="672" gradientTransform="matrix(1 0.04008 0 1 0 -47.610)"><stop offset="0.00000" stop-color="#BED5EA"/><stop offset="0.03274" stop-color="#D4EAF5"/><stop offset="0.06250" stop-color="#DFF2F7"/><stop offset="0.08036" stop-color="#E7F7F9"/><stop offset="0.09070" stop-color="#EFFBFB"/><stop offset="0.10104" stop-color="#DDE9E8"/><stop offset="0.11483" stop-color="#C3CCCC"/><stop offset="0.12863" stop-color="#A6ACAC"/><stop offset="0.13897" stop-color="#8D8F8F"/><stop offset="0.14586" stop-color="#767472"/><stop offset="0.14931" stop-color="#6A6663"/><stop offset="0.15526" stop-color="#67625E"/></linearGradient><linearGradient id="s50" gradientUnits="userSpaceOnUse" x1="0" y1="0" x2="0" y2="672" gradientTransform="matrix(1 0.04214 0 1 0 -51.074)"><stop offset="0.00000" stop-color="#BDD4EA"/><stop offset="0.03274" stop-color="#D4E9F5"/><stop offset="0.06250" stop-color="#DFF1F7"/><stop offset="0.08036" stop-color="#E7F7F9"/><stop offset="0.09092" stop-color="#EFFBFB"/><stop offset="0.10148" stop-color="#DDE9E8"/><stop offset="0.11557" stop-color="#C3CCCC"/><stop offset="0.12965" stop-color="#A6ACAC"/><stop offset="0.14022" stop-color="#8D8F8F"/><stop offset="0.14726" stop-color="#767472"/><stop offset="0.15078" stop-color="#6A6663"/><stop offset="0.15673" stop-color="#67625E"/></linearGradient><linearGradient id="s51" gradientUnits="userSpaceOnUse" x1="0" y1="0" x2="0" y2="672" gradientTransform="matrix(1 0.04420 0 1 0 -54.636)"><stop offset="0.00000" stop-color="#BDD4EA"/><stop offset="0.03274" stop-color="#D3E9F5"/><stop offset="0.06250" stop-color="#DEF1F7"/><stop offset="0.08036" stop-color="#E6F7F9"/><stop offset="0.09115" stop-color="#EFFBFB"/><stop offset="0.10195" stop-color="#DDE9E8"/><stop offset="0.11634" stop-color="#C3CCCC"/><stop offset="0.13073" stop-color="#A6ACAC"/><stop offset="0.14153" stop-color="#8D8F8F"/><stop offset="0.14872" stop-color="#767472"/><stop offset="0.15232" stop-color="#6A6663"/><stop offset="0.15827" stop-color="#67625E"/></linearGradient><linearGradient id="s52" gradientUnits="userSpaceOnUse" x1="0" y1="0" x2="0" y2="672" gradientTransform="matrix(1 0.04627 0 1 0 -58.298)"><stop offset="0.00000" stop-color="#BDD3E9"/><stop offset="0.03274" stop-color="#D3E9F5"/><stop offset="0.06250" stop-color="#DEF1F7"/><stop offset="0.08036" stop-color="#E6F7F9"/><stop offset="0.09139" stop-color="#EFFBFB"/><stop offset="0.10243" stop-color="#DDE9E8"/><stop offset="0.11715" stop-color="#C3CCCC"/><stop offset="0.13186" stop-color="#A6ACAC"/><stop offset="0.14290" stop-color="#8D8F8F"/><stop offset="0.15026" stop-color="#767472"/><stop offset="0.15394" stop-color="#6A6663"/><stop offset="0.15989" stop-color="#67625E"/></linearGradient><linearGradient id="s53" gradientUnits="userSpaceOnUse" x1="0" y1="0" x2="0" y2="672" gradientTransform="matrix(1 0.04833 0 1 0 -62.058)"><stop offset="0.00000" stop-color="#BCD3E9"/><stop offset="0.03274" stop-color="#D3E9F4"/><stop offset="0.06250" stop-color="#DEF1F6"/><stop offset="0.08036" stop-color="#E5F7F8"/><stop offset="0.09165" stop-color="#EFFBFB"/><stop offset="0.10294" stop-color="#DDE9E8"/><stop offset="0.11799" stop-color="#C3CCCC"/><stop offset="0.13305" stop-color="#A6ACAC"/><stop offset="0.14434" stop-color="#8D8F8F"/><stop offset="0.15186" stop-color="#767472"/><stop offset="0.15563" stop-color="#6A6663"/><stop offset="0.16158" stop-color="#67625E"/></linearGradient><linearGradient id="s54" gradientUnits="userSpaceOnUse" x1="0" y1="0" x2="0" y2="672" gradientTransform="matrix(1 0.05040 0 1 0 -65.918)"><stop offset="0.00000" stop-color="#BCD3E8"/><stop offset="0.03274" stop-color="#D2E8F4"/><stop offset="0.06250" stop-color="#DDF0F6"/><stop offset="0.08036" stop-color="#E5F6F8"/><stop offset="0.09191" stop-color="#EFFBFB"/><stop offset="0.10347" stop-color="#DDE9E8"/><stop offset="0.11887" stop-color="#C3CCCC"/><stop offset="0.13428" stop-color="#A6ACAC"/><stop offset="0.14584" stop-color="#8D8F8F"/><stop offset="0.15354" stop-color="#767472"/><stop offset="0.15739" stop-color="#6A6663"/><stop offset="0.16334" stop-color="#67625E"/></linearGradient><linearGradient id="s55" gradientUnits="userSpaceOnUse" x1="0" y1="0" x2="0" y2="672" gradientTransform="matrix(1 0.05246 0 1 0 -69.877)"><stop offset="0.00000" stop-color="#BBD2E8"/><stop offset="0.03274" stop-color="#D2E8F4"/><stop offset="0.06250" stop-color="#DDF0F6"/><stop offset="0.08036" stop-color="#E4F6F8"/><stop offset="0.09219" stop-color="#EFFBFB"/><stop offset="0.10402" stop-color="#DDE9E8"/><stop offset="0.11979" stop-color="#C3CCCC"/><stop offset="0.13557" stop-color="#A6ACAC"/><stop offset="0.14740" stop-color="#8D8F8F"/><stop offset="0.15528" stop-color="#767472"/><stop offset="0.15923" stop-color="#6A6663"/><stop offset="0.16518" stop-color="#67625E"/></linearGradient></defs><rect x="0" y="0" width="1334" height="672" fill="#67625E"/><rect x="0" y="0" width="24" height="200" fill="url(#s0)" shape-rendering="crispEdges"/><rect x="24" y="0" width="24" height="200" fill="url(#s1)" shape-rendering="crispEdges"/><rect x="48" y="0" width="24" height="200" fill="url(#s2)" shape-rendering="crispEdges"/><rect x="72" y="0" width="24" height="200" fill="url(#s3)" shape-rendering="crispEdges"/><rect x="96" y="0" width="24" height="200" fill="url(#s4)" shape-rendering="crispEdges"/><rect x="120" y="0" width="24" height="200" fill="url(#s5)" shape-rendering="crispEdges"/><rect x="144" y="0" width="24" height="200" fill="url(#s6)" shape-rendering="crispEdges"/><rect x="168" y="0" width="24" height="200" fill="url(#s7)" shape-rendering="crispEdges"/><rect x="192" y="0" width="24" height="200" fill="url(#s8)" shape-rendering="crispEdges"/><rect x="216" y="0" width="24" height="200" fill="url(#s9)" shape-rendering="crispEdges"/><rect x="240" y="0" width="24" height="200" fill="url(#s10)" shape-rendering="crispEdges"/><rect x="264" y="0" width="24" height="200" fill="url(#s11)" shape-rendering="crispEdges"/><rect x="288" y="0" width="24" height="200" fill="url(#s12)" shape-rendering="crispEdges"/><rect x="312" y="0" width="24" height="200" fill="url(#s13)" shape-rendering="crispEdges"/><rect x="336" y="0" width="24" height="200" fill="url(#s14)" shape-rendering="crispEdges"/><rect x="360" y="0" width="24" height="200" fill="url(#s15)" shape-rendering="crispEdges"/><rect x="384" y="0" width="24" height="200" fill="url(#s16)" shape-rendering="crispEdges"/><rect x="408" y="0" width="24" height="200" fill="url(#s17)" shape-rendering="crispEdges"/><rect x="432" y="0" width="24" height="200" fill="url(#s18)" shape-rendering="crispEdges"/><rect x="456" y="0" width="24" height="200" fill="url(#s19)" shape-rendering="crispEdges"/><rect x="480" y="0" width="24" height="200" fill="url(#s20)" shape-rendering="crispEdges"/><rect x="504" y="0" width="24" height="200" fill="url(#s21)" shape-rendering="crispEdges"/><rect x="528" y="0" width="24" height="200" fill="url(#s22)" shape-rendering="crispEdges"/><rect x="552" y="0" width="24" height="200" fill="url(#s23)" shape-rendering="crispEdges"/><rect x="576" y="0" width="24" height="200" fill="url(#s24)" shape-rendering="crispEdges"/><rect x="600" y="0" width="24" height="200" fill="url(#s25)" shape-rendering="crispEdges"/><rect x="624" y="0" width="24" height="200" fill="url(#s26)" shape-rendering="crispEdges"/><rect x="648" y="0" width="24" height="200" fill="url(#s27)" shape-rendering="crispEdges"/><rect x="672" y="0" width="24" height="200" fill="url(#s28)" shape-rendering="crispEdges"/><rect x="696" y="0" width="24" height="200" fill="url(#s29)" shape-rendering="crispEdges"/><rect x="720" y="0" width="24" height="200" fill="url(#s30)" shape-rendering="crispEdges"/><rect x="744" y="0" width="24" height="200" fill="url(#s31)" shape-rendering="crispEdges"/><rect x="768" y="0" width="24" height="200" fill="url(#s32)" shape-rendering="crispEdges"/><rect x="792" y="0" width="24" height="200" fill="url(#s33)" shape-rendering="crispEdges"/><rect x="816" y="0" width="24" height="200" fill="url(#s34)" shape-rendering="crispEdges"/><rect x="840" y="0" width="24" height="200" fill="url(#s35)" shape-rendering="crispEdges"/><rect x="864" y="0" width="24" height="200" fill="url(#s36)" shape-rendering="crispEdges"/><rect x="888" y="0" width="24" height="200" fill="url(#s37)" shape-rendering="crispEdges"/><rect x="912" y="0" width="24" height="200" fill="url(#s38)" shape-rendering="crispEdges"/><rect x="936" y="0" width="24" height="200" fill="url(#s39)" shape-rendering="crispEdges"/><rect x="960" y="0" width="24" height="200" fill="url(#s40)" shape-rendering="crispEdges"/><rect x="984" y="0" width="24" height="200" fill="url(#s41)" shape-rendering="crispEdges"/><rect x="1008" y="0" width="24" height="200" fill="url(#s42)" shape-rendering="crispEdges"/><rect x="1032" y="0" width="24" height="200" fill="url(#s43)" shape-rendering="crispEdges"/><rect x="1056" y="0" width="24" height="200" fill="url(#s44)" shape-rendering="crispEdges"/><rect x="1080" y="0" width="24" height="200" fill="url(#s45)" shape-rendering="crispEdges"/><rect x="1104" y="0" width="24" height="200" fill="url(#s46)" shape-rendering="crispEdges"/><rect x="1128" y="0" width="24" height="200" fill="url(#s47)" shape-rendering="crispEdges"/><rect x="1152" y="0" width="24" height="200" fill="url(#s48)" shape-rendering="crispEdges"/><rect x="1176" y="0" width="24" height="200" fill="url(#s49)" shape-rendering="crispEdges"/><rect x="1200" y="0" width="24" height="200" fill="url(#s50)" shape-rendering="crispEdges"/><rect x="1224" y="0" width="24" height="200" fill="url(#s51)" shape-rendering="crispEdges"/><rect x="1248" y="0" width="24" height="200" fill="url(#s52)" shape-rendering="crispEdges"/><rect x="1272" y="0" width="24" height="200" fill="url(#s53)" shape-rendering="crispEdges"/><rect x="1296" y="0" width="24" height="200" fill="url(#s54)" shape-rendering="crispEdges"/><rect x="1320" y="0" width="14" height="200" fill="url(#s55)" shape-rendering="crispEdges"/><clipPath id="plclip"><polygon points="161.0,552.0 1153.0,543.0 870.0,262.0 449.0,263.0"/></clipPath><filter id="blur6" x="-20%" y="-20%" width="140%" height="140%"><feGaussianBlur stdDeviation="5"/></filter><polygon points="161.0,552.0 1153.0,543.0 870.0,262.0 449.0,263.0" fill="#E8E7EC"/><g clip-path="url(#plclip)"><ellipse cx="662" cy="534" rx="490" ry="188" fill="#F0EFF3" filter="url(#blur6)"/><rect x="0" y="454" width="1334" height="120" fill="#F0EFF3"/></g><path d="M161.0 552.0L449.0 263.0M181.3 551.8L457.5 263.0M201.6 551.6L466.0 263.0M221.8 551.4L474.5 262.9M242.1 551.3L483.0 262.9M262.3 551.1L491.5 262.9M282.5 550.9L500.0 262.9M302.7 550.7L508.4 262.9M322.9 550.5L516.9 262.8M343.0 550.3L525.4 262.8M363.1 550.2L533.9 262.8M383.2 550.0L542.3 262.8M403.3 549.8L550.8 262.8M423.4 549.6L559.3 262.7M443.4 549.4L567.7 262.7M463.5 549.3L576.2 262.7M483.5 549.1L584.6 262.7M503.5 548.9L593.1 262.7M523.5 548.7L601.5 262.6M543.4 548.5L610.0 262.6M563.4 548.3L618.4 262.6M583.3 548.2L626.8 262.6M603.2 548.0L635.3 262.6M623.1 547.8L643.7 262.5M642.9 547.6L652.1 262.5M662.8 547.4L660.5 262.5M682.6 547.3L669.0 262.5M702.4 547.1L677.4 262.5M722.2 546.9L685.8 262.4M742.0 546.7L694.2 262.4M761.7 546.5L702.6 262.4M781.5 546.4L711.0 262.4M801.2 546.2L719.4 262.4M820.9 546.0L727.8 262.3M840.6 545.8L736.2 262.3M860.2 545.7L744.6 262.3M879.9 545.5L753.0 262.3M899.5 545.3L761.3 262.3M919.1 545.1L769.7 262.2M938.7 544.9L778.1 262.2M958.3 544.8L786.5 262.2M977.8 544.6L794.8 262.2M997.4 544.4L803.2 262.2M1016.9 544.2L811.6 262.1M1036.4 544.1L819.9 262.1M1055.9 543.9L828.3 262.1M1075.3 543.7L836.6 262.1M1094.8 543.5L845.0 262.1M1114.2 543.4L853.3 262.0M1133.6 543.2L861.7 262.0M1153.0 543.0L870.0 262.0" stroke="#A09EA6" stroke-width="0.8" stroke-opacity="0.45" fill="none"/><path d="M161.0 552.0L1153.0 543.0" stroke="#A3A1A9" stroke-width="0.9" stroke-opacity="0.60" fill="none"/><path d="M174.3 538.7L1140.1 530.2" stroke="#A3A1A9" stroke-width="0.9" stroke-opacity="0.60" fill="none"/><path d="M186.9 526.0L1127.9 518.0" stroke="#A3A1A9" stroke-width="0.9" stroke-opacity="0.60" fill="none"/><path d="M198.9 514.0L1116.2 506.5" stroke="#A3A1A9" stroke-width="0.9" stroke-opacity="0.60" fill="none"/><path d="M210.2 502.6L1105.1 495.5" stroke="#A3A1A9" stroke-width="0.9" stroke-opacity="0.60" fill="none"/><path d="M221.1 491.7L1094.6 485.0" stroke="#A3A1A9" stroke-width="0.9" stroke-opacity="0.60" fill="none"/><path d="M231.4 481.4L1084.5 475.0" stroke="#A3A1A9" stroke-width="0.9" stroke-opacity="0.60" fill="none"/><path d="M241.2 471.5L1074.9 465.5" stroke="#A3A1A9" stroke-width="0.9" stroke-opacity="0.60" fill="none"/><path d="M250.6 462.1L1065.7 456.4" stroke="#A3A1A9" stroke-width="0.9" stroke-opacity="0.60" fill="none"/><path d="M259.6 453.0L1056.9 447.6" stroke="#A3A1A9" stroke-width="0.9" stroke-opacity="0.60" fill="none"/><path d="M268.2 444.4L1048.5 439.3" stroke="#A3A1A9" stroke-width="0.9" stroke-opacity="0.60" fill="none"/><path d="M276.4 436.2L1040.5 431.3" stroke="#A3A1A9" stroke-width="0.9" stroke-opacity="0.56" fill="none"/><path d="M284.3 428.2L1032.7 423.6" stroke="#A3A1A9" stroke-width="0.9" stroke-opacity="0.52" fill="none"/><path d="M291.9 420.6L1025.3 416.2" stroke="#A3A1A9" stroke-width="0.9" stroke-opacity="0.48" fill="none"/><path d="M299.2 413.3L1018.2 409.1" stroke="#A3A1A9" stroke-width="0.9" stroke-opacity="0.44" fill="none"/><path d="M306.2 406.3L1011.3 402.3" stroke="#A3A1A9" stroke-width="0.9" stroke-opacity="0.41" fill="none"/><path d="M312.9 399.6L1004.7 395.7" stroke="#A3A1A9" stroke-width="0.9" stroke-opacity="0.38" fill="none"/><path d="M319.4 393.1L998.3 389.4" stroke="#A3A1A9" stroke-width="0.9" stroke-opacity="0.35" fill="none"/><path d="M325.6 386.8L992.2 383.3" stroke="#A3A1A9" stroke-width="0.9" stroke-opacity="0.32" fill="none"/><path d="M331.6 380.8L986.2 377.4" stroke="#A3A1A9" stroke-width="0.9" stroke-opacity="0.29" fill="none"/><path d="M337.4 375.0L980.5 371.8" stroke="#A3A1A9" stroke-width="0.9" stroke-opacity="0.27" fill="none"/><path d="M343.0 369.3L975.0 366.3" stroke="#A3A1A9" stroke-width="0.9" stroke-opacity="0.24" fill="none"/><path d="M348.4 363.9L969.7 361.0" stroke="#A3A1A9" stroke-width="0.9" stroke-opacity="0.22" fill="none"/><path d="M353.7 358.7L964.5 355.9" stroke="#A3A1A9" stroke-width="0.9" stroke-opacity="0.20" fill="none"/><path d="M358.7 353.6L959.5 350.9" stroke="#A3A1A9" stroke-width="0.9" stroke-opacity="0.18" fill="none"/><path d="M363.6 348.7L954.7 346.1" stroke="#A3A1A9" stroke-width="0.9" stroke-opacity="0.16" fill="none"/><path d="M368.3 344.0L950.0 341.5" stroke="#A3A1A9" stroke-width="0.9" stroke-opacity="0.14" fill="none"/><path d="M372.9 339.4L945.5 337.0" stroke="#A3A1A9" stroke-width="0.9" stroke-opacity="0.12" fill="none"/><path d="M377.3 334.9L941.1 332.6" stroke="#A3A1A9" stroke-width="0.9" stroke-opacity="0.10" fill="none"/><path d="M381.6 330.6L936.9 328.4" stroke="#A3A1A9" stroke-width="0.9" stroke-opacity="0.09" fill="none"/><path d="M385.8 326.4L932.7 324.3" stroke="#A3A1A9" stroke-width="0.9" stroke-opacity="0.07" fill="none"/><path d="M389.9 322.3L928.7 320.3" stroke="#A3A1A9" stroke-width="0.9" stroke-opacity="0.06" fill="none"/><path d="M393.8 318.4L924.8 316.4" stroke="#A3A1A9" stroke-width="0.9" stroke-opacity="0.05" fill="none"/><path d="M397.6 314.6L921.1 312.7" stroke="#A3A1A9" stroke-width="0.9" stroke-opacity="0.05" fill="none"/><path d="M401.3 310.8L917.4 309.0" stroke="#A3A1A9" stroke-width="0.9" stroke-opacity="0.05" fill="none"/><path d="M404.9 307.2L913.8 305.5" stroke="#A3A1A9" stroke-width="0.9" stroke-opacity="0.05" fill="none"/><path d="M408.4 303.7L910.3 302.0" stroke="#A3A1A9" stroke-width="0.9" stroke-opacity="0.05" fill="none"/><path d="M411.8 300.3L906.9 298.7" stroke="#A3A1A9" stroke-width="0.9" stroke-opacity="0.05" fill="none"/><path d="M415.2 297.0L903.6 295.4" stroke="#A3A1A9" stroke-width="0.9" stroke-opacity="0.05" fill="none"/><path d="M418.4 293.7L900.4 292.2" stroke="#A3A1A9" stroke-width="0.9" stroke-opacity="0.05" fill="none"/><path d="M421.5 290.6L897.3 289.1" stroke="#A3A1A9" stroke-width="0.9" stroke-opacity="0.05" fill="none"/><path d="M424.6 287.5L894.3 286.1" stroke="#A3A1A9" stroke-width="0.9" stroke-opacity="0.05" fill="none"/><path d="M427.6 284.5L891.3 283.1" stroke="#A3A1A9" stroke-width="0.9" stroke-opacity="0.05" fill="none"/><path d="M430.5 281.6L888.4 280.3" stroke="#A3A1A9" stroke-width="0.9" stroke-opacity="0.05" fill="none"/><path d="M433.3 278.7L885.6 277.5" stroke="#A3A1A9" stroke-width="0.9" stroke-opacity="0.05" fill="none"/><path d="M436.1 275.9L882.8 274.7" stroke="#A3A1A9" stroke-width="0.9" stroke-opacity="0.05" fill="none"/><path d="M438.8 273.2L880.1 272.1" stroke="#A3A1A9" stroke-width="0.9" stroke-opacity="0.05" fill="none"/><path d="M441.5 270.6L877.5 269.5" stroke="#A3A1A9" stroke-width="0.9" stroke-opacity="0.05" fill="none"/><path d="M444.0 268.0L874.9 266.9" stroke="#A3A1A9" stroke-width="0.9" stroke-opacity="0.05" fill="none"/><path d="M446.5 265.5L872.4 264.4" stroke="#A3A1A9" stroke-width="0.9" stroke-opacity="0.05" fill="none"/><path d="M449.0 263.0L870.0 262.0" stroke="#A3A1A9" stroke-width="0.9" stroke-opacity="0.05" fill="none"/><path d="M-0.5 81.0L113.0 409.0M113.0 409.0L360.0 352.0M113.0 409.0L304.0 408.5M1333.0 0.0L1201.0 402.0M906.0 298.0L1201.0 402.0M1014.0 404.0L1201.0 402.0M955.0 346.0L1334.0 344.0M659.5 0.0L659.5 262.0M422.0 0.0L780.0 255.0M780.0 255.0L805.0 263.0M1043.0 0.0L780.0 255.0M780.0 255.0L745.0 263.0" stroke="#E2E2E2" stroke-width="0.95" fill="none"/><g transform="translate(636,334)"><path d="M-5.5 11 Q2 15 9 11" fill="none" stroke="#70EEF8" stroke-width="3.2" stroke-linecap="round"/><path d="M2 1 L8.5 11 L13 0 L12 -3" fill="none" stroke="#70EEF8" stroke-width="3" stroke-linecap="round"/><path d="M6 10 L14 3" fill="none" stroke="#B8D8F0" stroke-width="1.5"/><rect x="-0.8" y="-10" width="2.4" height="19" fill="#4A5478"/><rect x="-0.5" y="-10" width="1.4" height="4" fill="#9A3030"/><path d="M-9 -2 L0 -3" stroke="#7A6A60" stroke-width="1"/><path d="M1 -3 L9 -4" stroke="#B02A20" stroke-width="1.2"/><path d="M-6 2 L-2 7" stroke="#3A6A70" stroke-width="1.2"/><path d="M-14 7 L-12 12" stroke="#7A8AB0" stroke-width="1"/><path d="M-12 6 Q-5 4 -1 8" fill="none" stroke="#B5C8E0" stroke-width="1.5"/></g></svg>
<div class="a" style="left:869px;top:118px;width:152px;height:26px;border:1px solid #4E5355;border-radius:4px;background:linear-gradient(#FDFDFD,#D9D9D9);overflow:hidden"><div class="a" style="left:0;top:0;width:38px;height:24px;background:radial-gradient(ellipse at 50% 50%,#6E6E6E,#555)"></div><div class="a" style="left:37px;top:0;width:1px;height:24px;background:#555"></div><div class="a" style="left:75px;top:0;width:1px;height:24px;background:#777"></div><div class="a" style="left:113px;top:0;width:1px;height:24px;background:#777"></div></div>
<svg class="a" style="left:869px;top:118px;" width="152" height="26" viewBox="0 0 152 26"><path d="M18.5 3.5 L27 8 L27 17.5 L18.5 22 L10 17.5 L10 8 Z" fill="none" stroke="#C8C8C8" stroke-width="1.2"/><path d="M18.5 7 L24.5 10 L24.5 16.5 L18.5 19.5 L12.5 16.5 L12.5 10 Z" fill="#3A3A3A"/><path d="M18.5 12.5 L24.5 10 L24.5 16.5 L18.5 19.5Z" fill="#4A4A4A"/><path d="M53 16 L56 8 L62 12" fill="none" stroke="#2A2A2A" stroke-width="1"/><circle cx="56" cy="8" r="2.6" fill="#222"/><circle cx="52.5" cy="18.5" r="2.6" fill="#222"/><circle cx="62" cy="13" r="2.6" fill="#222"/><path d="M96 6 L101 13 L88.5 19 Z" fill="none" stroke="#2A2A2A" stroke-width="1.6"/><path d="M128 3.5 L139 7.5 L141 15 L129 19 Z" fill="#2A2A2A"/></svg>
<svg class="a" style="left:1505px;top:108px;" width="110" height="132" viewBox="0 0 110 132"><defs><linearGradient id="gr" x1="0" y1="0" x2="0" y2="1"><stop offset="0" stop-color="#E85A4A"/><stop offset="1" stop-color="#A81F10"/></linearGradient><linearGradient id="gg" x1="0" y1="0" x2="1" y2="0"><stop offset="0" stop-color="#3D9E24"/><stop offset="0.5" stop-color="#7ADB4F"/><stop offset="1" stop-color="#46A82A"/></linearGradient><linearGradient id="gw" x1="0" y1="0" x2="0" y2="1"><stop offset="0" stop-color="#555"/><stop offset="0.5" stop-color="#D0D0D0"/><stop offset="1" stop-color="#666"/></linearGradient><linearGradient id="gw2" x1="0" y1="0" x2="1" y2="0"><stop offset="0" stop-color="#888"/><stop offset="0.5" stop-color="#E0E0E0"/><stop offset="1" stop-color="#999"/></linearGradient></defs><path d="M38.799999999999955 22.69999999999999 L56.59999999999991 22.69999999999999 L47.5 47.5 Z" fill="url(#gg)"/><path d="M58 58.30000000000001 L81 50.5 Q85 57.5 81 64.69999999999999 Z" fill="url(#gr)"/><path d="M36.700000000000045 58.30000000000001 L14 50.69999999999999 Q11 58 14 65.30000000000001 Z" fill="url(#gw)"/><path d="M47.5 69.6 L54 85.5 Q47.5 88 41.5 85.5 Z" fill="url(#gw2)"/><rect x="40" y="49" width="16" height="19.5" fill="#FFFFFF"/><rect x="40" y="49" width="16" height="4" fill="#7A7C80"/></svg>
<div class="t" style="left:1547px;top:115.84px;font-size:12px;letter-spacing:0px;color:#F4F4F4;">y</div>
<div class="t" style="left:1589.5px;top:159.84px;font-size:12px;letter-spacing:0px;color:#F4F4F4;">x</div>
<svg class="a" style="left:1590px;top:120px;" width="9" height="10" viewBox="0 0 9 10"><path d="M2 4.5 L2 3 A2.2 2.2 0 0 1 6.4 3" fill="none" stroke="#D8DCE0" stroke-width="1"/><rect x="0.5" y="4.5" width="7.5" height="5" fill="#D8DCE0"/></svg>
<svg class="a" style="left:1525px;top:219px;" width="13" height="12" viewBox="0 0 13 12"><path d="M12 1 L1.5 6 L12 11 M12 6 H3" fill="none" stroke="#C8C8C8" stroke-width="1.1"/></svg>
<div class="t" style="left:1541.7px;top:218.50px;font-size:13px;letter-spacing:-0.165px;color:#CACACA;">Persp</div>
<div class="a" style="left:0px;top:804px;width:1304px;height:395px;background:#C2C2C2;border-right:1px solid #8C8C8C;border-bottom:1px solid #8C8C8C"></div>
<div class="tab" style="left:0px;top:785px;width:102px;height:19px;border-left:none;border-top-left-radius:0"></div>
<svg class="a" style="left:9px;top:789px;" width="13" height="11" viewBox="0 0 13 11"><path d="M0.5 2 Q0.5 0.5 2 0.5 L5 0.5 L6.2 2 L11 2 Q12.5 2 12.5 3.5 L12.5 9.5 Q12.5 10.5 11.5 10.5 L1.5 10.5 Q0.5 10.5 0.5 9.5 Z" fill="#9A9A9A" stroke="#4A4A4A" stroke-width="1"/><path d="M0.5 4 H12.5" stroke="#4A4A4A"/></svg>
<div class="t" style="left:27px;top:787.57px;font-size:13.5px;letter-spacing:-0.002px;color:#222;">Project</div>
<svg class="a" style="left:117px;top:787px;" width="11" height="14" viewBox="0 0 11 14"><rect x="0.5" y="0.5" width="10" height="13" fill="#F2F2F2" stroke="#444"/><path d="M2.5 3.5 H8.5 M2.5 6 H8.5 M2.5 8.5 H8.5 M2.5 11 H6" stroke="#555"/></svg>
<div class="t" style="left:132px;top:787.57px;font-size:13.5px;letter-spacing:0.079px;color:#222;">Console</div>
<svg class="a" style="left:1269px;top:789px;" width="9" height="11" viewBox="0 0 9 11"><path d="M2 5 L2 3.2 A2.5 2.5 0 0 1 7 3.2 L7 5" fill="none" stroke="#444" stroke-width="1.3"/><rect x="0.5" y="5" width="8" height="6" fill="#444"/></svg>
<svg class="a" style="left:1282px;top:793px;" width="18" height="9" viewBox="0 0 18 9"><path d="M0 2.5 L5 2.5 L2.5 5.5 Z" fill="#333"/><rect x="7" y="0" width="10" height="1.6" fill="#333"/><rect x="7" y="3" width="10" height="1.6" fill="#777"/><rect x="7" y="6" width="10" height="1.6" fill="#333"/></svg>
<div class="tbar" style="left:0px;top:804px;width:1303px;height:22px;"></div>
<div class="a" style="left:7px;top:806px;width:1px;height:19px;background:#A9A9A9"></div>
<div class="a" style="left:62px;top:806px;width:1px;height:19px;background:#A9A9A9"></div>
<div class="t" style="left:14.4px;top:809.77px;font-size:11.5px;letter-spacing:-0.383px;color:#222;">Create</div>
<div class="caret" style="left:51px;top:813px;border-top-color:#444"></div>
<div class="a" style="left:848px;top:806px;width:357px;height:16px;border:1px solid #5A5A5A;border-top-color:#2E2E2E;border-radius:8px;background:linear-gradient(#D0D0D0,#DCDCDC 30%,#DCDCDC)"></div>
<svg class="a" style="left:855px;top:810px;" width="10" height="10" viewBox="0 0 10 10"><circle cx="4" cy="4" r="3" fill="none" stroke="#555" stroke-width="1.2"/><path d="M6.3 6.3 L9 9" stroke="#555" stroke-width="1.4"/></svg>
<div class="a" style="left:1216px;top:805px;width:1px;height:20px;background:#A9A9A9"></div>
<div class="a" style="left:1243px;top:805px;width:1px;height:20px;background:#A9A9A9"></div>
<div class="a" style="left:1269px;top:805px;width:1px;height:20px;background:#A9A9A9"></div>
<div class="a" style="left:1295px;top:805px;width:1px;height:20px;background:#A9A9A9"></div>
<svg class="a" style="left:1223px;top:807px;" width="15" height="13" viewBox="0 0 15 13"><path d="M5 1 L9.5 8.5 L0.5 8.5 Z" fill="#444"/><circle cx="10" cy="5" r="3" fill="#444"/><rect x="8" y="8" width="6" height="5" fill="#444"/></svg>
<svg class="a" style="left:1250px;top:808px;" width="14" height="13" viewBox="0 0 14 13"><path d="M1 1 L7 1 L13 7 L7 13 L1 7 Z" fill="#444"/><circle cx="4" cy="4" r="1.3" fill="#DDD"/></svg>
<svg class="a" style="left:1275px;top:808px;" width="14" height="13" viewBox="0 0 14 13"><path d="M7 0.5 L8.8 5 L13.5 5 L9.7 8 L11 12.5 L7 9.8 L3 12.5 L4.3 8 L0.5 5 L5.2 5 Z" fill="#8A8A8A"/></svg>
<div class="a" style="left:380px;top:826px;width:2px;height:352px;background:#9A9A9A"></div>
<div class="a" style="left:0px;top:882px;width:380px;height:19px;background:#8F8F8F"></div>
<svg class="a" style="left:5px;top:832px;" width="10" height="10" viewBox="0 0 10 10"><path d="M0.5 0 L9 5 L0.5 10 Z" fill="#7B7B7B"/></svg>
<svg class="a" style="left:20px;top:829px;" width="17" height="16" viewBox="0 0 17 16"><path d="M8.5 0.5 L10.8 5.6 L16.3 6.1 L12.1 9.8 L13.4 15.3 L8.5 12.4 L3.6 15.3 L4.9 9.8 L0.7 6.1 L6.2 5.6 Z" fill="#F6CF2C" stroke="#D4A81A" stroke-width="0.8"/></svg>
<div class="t" style="left:41.0px;top:830.07px;font-size:13.5px;letter-spacing:0.122px;color:#111;font-weight:bold;">Favorites</div>
<svg class="a" style="left:4px;top:870.5px;" width="11" height="10" viewBox="0 0 11 10"><path d="M0 0.5 L10.5 0.5 L5.25 9.5 Z" fill="#7B7B7B"/></svg>
<svg class="a" style="left:20px;top:865px;" width="17" height="14" viewBox="0 0 17 14"><defs><linearGradient id="fg" x1="0" y1="0" x2="0" y2="1"><stop offset="0" stop-color="#8894A0"/><stop offset="1" stop-color="#4B555C"/></linearGradient></defs><path d="M1 1.5 Q1 0.5 2 0.5 L6.5 0.5 L7.8 2 L15.5 2 Q16.5 2 16.5 3 L16.5 13 Q16.5 13.8 15.5 13.8 L1.5 13.8 Q0.5 13.8 0.5 13 Z" fill="#D8DADC"/><rect x="0.5" y="3" width="16" height="10.8" rx="1" fill="url(#fg)"/></svg>
<div class="t" style="left:41.0px;top:867.07px;font-size:13.5px;letter-spacing:-0.255px;color:#111;font-weight:bold;">Assets</div>
<svg class="a" style="left:21px;top:888.5px;" width="11" height="10" viewBox="0 0 11 10"><path d="M0 0.5 L10.5 0.5 L5.25 9.5 Z" fill="#5E5E5E"/></svg>
<svg class="a" style="left:37px;top:883px;" width="17" height="14" viewBox="0 0 17 14"><defs><linearGradient id="fg" x1="0" y1="0" x2="0" y2="1"><stop offset="0" stop-color="#8894A0"/><stop offset="1" stop-color="#4B555C"/></linearGradient></defs><path d="M1 1.5 Q1 0.5 2 0.5 L6.5 0.5 L7.8 2 L15.5 2 Q16.5 2 16.5 3 L16.5 13 Q16.5 13.8 15.5 13.8 L1.5 13.8 Q0.5 13.8 0.5 13 Z" fill="#D8DADC"/><rect x="0.5" y="3" width="16" height="10.8" rx="1" fill="url(#fg)"/></svg>
<div class="t" style="left:57.5px;top:885.07px;font-size:13.5px;letter-spacing:0.268px;color:#F2F2F2;">3DGamekitLite</div>
<svg class="a" style="left:39px;top:907px;" width="10" height="10" viewBox="0 0 10 10"><path d="M0.5 0 L9 5 L0.5 10 Z" fill="#7B7B7B"/></svg>
<svg class="a" style="left:54px;top:903px;" width="17" height="14" viewBox="0 0 17 14"><defs><linearGradient id="fg" x1="0" y1="0" x2="0" y2="1"><stop offset="0" stop-color="#8894A0"/><stop offset="1" stop-color="#4B555C"/></linearGradient></defs><path d="M1 1.5 Q1 0.5 2 0.5 L6.5 0.5 L7.8 2 L15.5 2 Q16.5 2 16.5 3 L16.5 13 Q16.5 13.8 15.5 13.8 L1.5 13.8 Q0.5 13.8 0.5 13 Z" fill="#D8DADC"/><rect x="0.5" y="3" width="16" height="10.8" rx="1" fill="url(#fg)"/></svg>
<div class="t" style="left:74.0px;top:905.07px;font-size:13.5px;letter-spacing:0.625px;color:#111;">Art</div>
<svg class="a" style="left:39px;top:926px;" width="10" height="10" viewBox="0 0 10 10"><path d="M0.5 0 L9 5 L0.5 10 Z" fill="#7B7B7B"/></svg>
<svg class="a" style="left:54px;top:922px;" width="17" height="14" viewBox="0 0 17 14"><defs><linearGradient id="fg" x1="0" y1="0" x2="0" y2="1"><stop offset="0" stop-color="#8894A0"/><stop offset="1" stop-color="#4B555C"/></linearGradient></defs><path d="M1 1.5 Q1 0.5 2 0.5 L6.5 0.5 L7.8 2 L15.5 2 Q16.5 2 16.5 3 L16.5 13 Q16.5 13.8 15.5 13.8 L1.5 13.8 Q0.5 13.8 0.5 13 Z" fill="#D8DADC"/><rect x="0.5" y="3" width="16" height="10.8" rx="1" fill="url(#fg)"/></svg>
<div class="t" style="left:74.0px;top:924.07px;font-size:13.5px;letter-spacing:0.493px;color:#111;">Audio</div>
<svg class="a" style="left:54px;top:941px;" width="17" height="14" viewBox="0 0 17 14"><defs><linearGradient id="fg" x1="0" y1="0" x2="0" y2="1"><stop offset="0" stop-color="#8894A0"/><stop offset="1" stop-color="#4B555C"/></linearGradient></defs><path d="M1 1.5 Q1 0.5 2 0.5 L6.5 0.5 L7.8 2 L15.5 2 Q16.5 2 16.5 3 L16.5 13 Q16.5 13.8 15.5 13.8 L1.5 13.8 Q0.5 13.8 0.5 13 Z" fill="#D8DADC"/><rect x="0.5" y="3" width="16" height="10.8" rx="1" fill="url(#fg)"/></svg>
<div class="t" style="left:74.0px;top:943.07px;font-size:13.5px;letter-spacing:0.484px;color:#111;">Documentation</div>
<svg class="a" style="left:39px;top:964px;" width="10" height="10" viewBox="0 0 10 10"><path d="M0.5 0 L9 5 L0.5 10 Z" fill="#7B7B7B"/></svg>
<svg class="a" style="left:54px;top:960px;" width="17" height="14" viewBox="0 0 17 14"><defs><linearGradient id="fg" x1="0" y1="0" x2="0" y2="1"><stop offset="0" stop-color="#8894A0"/><stop offset="1" stop-color="#4B555C"/></linearGradient></defs><path d="M1 1.5 Q1 0.5 2 0.5 L6.5 0.5 L7.8 2 L15.5 2 Q16.5 2 16.5 3 L16.5 13 Q16.5 13.8 15.5 13.8 L1.5 13.8 Q0.5 13.8 0.5 13 Z" fill="#D8DADC"/><rect x="0.5" y="3" width="16" height="10.8" rx="1" fill="url(#fg)"/></svg>
<div class="t" style="left:74.0px;top:962.07px;font-size:13.5px;letter-spacing:0.31px;color:#111;">Gizmos</div>
<svg class="a" style="left:54px;top:979px;" width="17" height="14" viewBox="0 0 17 14"><defs><linearGradient id="fg" x1="0" y1="0" x2="0" y2="1"><stop offset="0" stop-color="#8894A0"/><stop offset="1" stop-color="#4B555C"/></linearGradient></defs><path d="M1 1.5 Q1 0.5 2 0.5 L6.5 0.5 L7.8 2 L15.5 2 Q16.5 2 16.5 3 L16.5 13 Q16.5 13.8 15.5 13.8 L1.5 13.8 Q0.5 13.8 0.5 13 Z" fill="#D8DADC"/><rect x="0.5" y="3" width="16" height="10.8" rx="1" fill="url(#fg)"/></svg>
<div class="t" style="left:74.0px;top:981.07px;font-size:13.5px;letter-spacing:0.346px;color:#111;">Localization</div>
<svg class="a" style="left:39px;top:1002px;" width="10" height="10" viewBox="0 0 10 10"><path d="M0.5 0 L9 5 L0.5 10 Z" fill="#7B7B7B"/></svg>
<svg class="a" style="left:54px;top:998px;" width="17" height="14" viewBox="0 0 17 14"><defs><linearGradient id="fg" x1="0" y1="0" x2="0" y2="1"><stop offset="0" stop-color="#8894A0"/><stop offset="1" stop-color="#4B555C"/></linearGradient></defs><path d="M1 1.5 Q1 0.5 2 0.5 L6.5 0.5 L7.8 2 L15.5 2 Q16.5 2 16.5 3 L16.5 13 Q16.5 13.8 15.5 13.8 L1.5 13.8 Q0.5 13.8 0.5 13 Z" fill="#D8DADC"/><rect x="0.5" y="3" width="16" height="10.8" rx="1" fill="url(#fg)"/></svg>
<div class="t" style="left:74.0px;top:1000.07px;font-size:13.5px;letter-spacing:-0.355px;color:#111;">Packages</div>
<svg class="a" style="left:39px;top:1021px;" width="10" height="10" viewBox="0 0 10 10"><path d="M0.5 0 L9 5 L0.5 10 Z" fill="#7B7B7B"/></svg>
<svg class="a" style="left:54px;top:1017px;" width="17" height="14" viewBox="0 0 17 14"><defs><linearGradient id="fg" x1="0" y1="0" x2="0" y2="1"><stop offset="0" stop-color="#8894A0"/><stop offset="1" stop-color="#4B555C"/></linearGradient></defs><path d="M1 1.5 Q1 0.5 2 0.5 L6.5 0.5 L7.8 2 L15.5 2 Q16.5 2 16.5 3 L16.5 13 Q16.5 13.8 15.5 13.8 L1.5 13.8 Q0.5 13.8 0.5 13 Z" fill="#D8DADC"/><rect x="0.5" y="3" width="16" height="10.8" rx="1" fill="url(#fg)"/></svg>
<div class="t" style="left:74.0px;top:1019.07px;font-size:13.5px;letter-spacing:-0.22px;color:#111;">Prefabs</div>
<svg class="a" style="left:54px;top:1036px;" width="17" height="14" viewBox="0 0 17 14"><defs><linearGradient id="fg" x1="0" y1="0" x2="0" y2="1"><stop offset="0" stop-color="#8894A0"/><stop offset="1" stop-color="#4B555C"/></linearGradient></defs><path d="M1 1.5 Q1 0.5 2 0.5 L6.5 0.5 L7.8 2 L15.5 2 Q16.5 2 16.5 3 L16.5 13 Q16.5 13.8 15.5 13.8 L1.5 13.8 Q0.5 13.8 0.5 13 Z" fill="#D8DADC"/><rect x="0.5" y="3" width="16" height="10.8" rx="1" fill="url(#fg)"/></svg>
<div class="t" style="left:74.0px;top:1038.07px;font-size:13.5px;letter-spacing:-0.665px;color:#111;">Scenes</div>
<svg class="a" style="left:39px;top:1059px;" width="10" height="10" viewBox="0 0 10 10"><path d="M0.5 0 L9 5 L0.5 10 Z" fill="#7B7B7B"/></svg>
<svg class="a" style="left:54px;top:1055px;" width="17" height="14" viewBox="0 0 17 14"><defs><linearGradient id="fg" x1="0" y1="0" x2="0" y2="1"><stop offset="0" stop-color="#8894A0"/><stop offset="1" stop-color="#4B555C"/></linearGradient></defs><path d="M1 1.5 Q1 0.5 2 0.5 L6.5 0.5 L7.8 2 L15.5 2 Q16.5 2 16.5 3 L16.5 13 Q16.5 13.8 15.5 13.8 L1.5 13.8 Q0.5 13.8 0.5 13 Z" fill="#D8DADC"/><rect x="0.5" y="3" width="16" height="10.8" rx="1" fill="url(#fg)"/></svg>
<div class="t" style="left:74.0px;top:1057.07px;font-size:13.5px;letter-spacing:0.007px;color:#111;">Scripts</div>
<svg class="a" style="left:39px;top:1078px;" width="10" height="10" viewBox="0 0 10 10"><path d="M0.5 0 L9 5 L0.5 10 Z" fill="#7B7B7B"/></svg>
<svg class="a" style="left:54px;top:1074px;" width="17" height="14" viewBox="0 0 17 14"><defs><linearGradient id="fg" x1="0" y1="0" x2="0" y2="1"><stop offset="0" stop-color="#8894A0"/><stop offset="1" stop-color="#4B555C"/></linearGradient></defs><path d="M1 1.5 Q1 0.5 2 0.5 L6.5 0.5 L7.8 2 L15.5 2 Q16.5 2 16.5 3 L16.5 13 Q16.5 13.8 15.5 13.8 L1.5 13.8 Q0.5 13.8 0.5 13 Z" fill="#D8DADC"/><rect x="0.5" y="3" width="16" height="10.8" rx="1" fill="url(#fg)"/></svg>
<div class="t" style="left:74.0px;top:1076.07px;font-size:13.5px;letter-spacing:0.579px;color:#111;">TutorialInfo</div>
<svg class="a" style="left:22px;top:1097px;" width="10" height="10" viewBox="0 0 10 10"><path d="M0.5 0 L9 5 L0.5 10 Z" fill="#7B7B7B"/></svg>
<svg class="a" style="left:37px;top:1093px;" width="17" height="14" viewBox="0 0 17 14"><defs><linearGradient id="fg" x1="0" y1="0" x2="0" y2="1"><stop offset="0" stop-color="#8894A0"/><stop offset="1" stop-color="#4B555C"/></linearGradient></defs><path d="M1 1.5 Q1 0.5 2 0.5 L6.5 0.5 L7.8 2 L15.5 2 Q16.5 2 16.5 3 L16.5 13 Q16.5 13.8 15.5 13.8 L1.5 13.8 Q0.5 13.8 0.5 13 Z" fill="#D8DADC"/><rect x="0.5" y="3" width="16" height="10.8" rx="1" fill="url(#fg)"/></svg>
<div class="t" style="left:57.5px;top:1095.07px;font-size:13.5px;letter-spacing:0.25px;color:#111;">Gizmos</div>
<svg class="a" style="left:37px;top:1112px;" width="17" height="14" viewBox="0 0 17 14"><defs><linearGradient id="fg" x1="0" y1="0" x2="0" y2="1"><stop offset="0" stop-color="#8894A0"/><stop offset="1" stop-color="#4B555C"/></linearGradient></defs><path d="M1 1.5 Q1 0.5 2 0.5 L6.5 0.5 L7.8 2 L15.5 2 Q16.5 2 16.5 3 L16.5 13 Q16.5 13.8 15.5 13.8 L1.5 13.8 Q0.5 13.8 0.5 13 Z" fill="#D8DADC"/><rect x="0.5" y="3" width="16" height="10.8" rx="1" fill="url(#fg)"/></svg>
<div class="t" style="left:57.5px;top:1114.07px;font-size:13.5px;letter-spacing:-0.292px;color:#111;">newScene</div>
<svg class="a" style="left:5px;top:1135px;" width="10" height="10" viewBox="0 0 10 10"><path d="M0.5 0 L9 5 L0.5 10 Z" fill="#7B7B7B"/></svg>
<svg class="a" style="left:20px;top:1131px;" width="17" height="14" viewBox="0 0 17 14"><defs><linearGradient id="fg" x1="0" y1="0" x2="0" y2="1"><stop offset="0" stop-color="#8894A0"/><stop offset="1" stop-color="#4B555C"/></linearGradient></defs><path d="M1 1.5 Q1 0.5 2 0.5 L6.5 0.5 L7.8 2 L15.5 2 Q16.5 2 16.5 3 L16.5 13 Q16.5 13.8 15.5 13.8 L1.5 13.8 Q0.5 13.8 0.5 13 Z" fill="#D8DADC"/><rect x="0.5" y="3" width="16" height="10.8" rx="1" fill="url(#fg)"/></svg>
<div class="t" style="left:41.0px;top:1133.07px;font-size:13.5px;letter-spacing:-0.071px;color:#111;font-weight:bold;">Packages</div>
<div class="a" style="left:382px;top:826px;width:921px;height:21px;background:#DCDCDC;border-bottom:1px solid #A5A5A5"></div>
<div class="t" style="left:388px;top:829.57px;font-size:13.5px;letter-spacing:-0.103px;color:#222;">Assets</div>
<svg class="a" style="left:436px;top:831px;" width="7" height="11" viewBox="0 0 7 11"><path d="M1 0.5 L6 5.5 L1 10.5" fill="none" stroke="#888" stroke-width="1.3"/></svg>
<div class="t" style="left:453px;top:829.57px;font-size:13.5px;letter-spacing:0.289px;color:#111;font-weight:bold;">3DGamekitLite</div>
<svg class="a" style="left:561px;top:831px;" width="7" height="11" viewBox="0 0 7 11"><path d="M1 0.5 L6 5.5 L1 10.5" fill="none" stroke="#888" stroke-width="1.3"/></svg>
<svg class="a" style="left:400px;top:850px;" width="17" height="14" viewBox="0 0 17 14"><defs><linearGradient id="fg" x1="0" y1="0" x2="0" y2="1"><stop offset="0" stop-color="#8894A0"/><stop offset="1" stop-color="#4B555C"/></linearGradient></defs><path d="M1 1.5 Q1 0.5 2 0.5 L6.5 0.5 L7.8 2 L15.5 2 Q16.5 2 16.5 3 L16.5 13 Q16.5 13.8 15.5 13.8 L1.5 13.8 Q0.5 13.8 0.5 13 Z" fill="#D8DADC"/><rect x="0.5" y="3" width="16" height="10.8" rx="1" fill="url(#fg)"/></svg>
<div class="t" style="left:421px;top:850.07px;font-size:13.5px;letter-spacing:1.125px;color:#111;">Art</div>
<svg class="a" style="left:400px;top:869px;" width="17" height="14" viewBox="0 0 17 14"><defs><linearGradient id="fg" x1="0" y1="0" x2="0" y2="1"><stop offset="0" stop-color="#8894A0"/><stop offset="1" stop-color="#4B555C"/></linearGradient></defs><path d="M1 1.5 Q1 0.5 2 0.5 L6.5 0.5 L7.8 2 L15.5 2 Q16.5 2 16.5 3 L16.5 13 Q16.5 13.8 15.5 13.8 L1.5 13.8 Q0.5 13.8 0.5 13 Z" fill="#D8DADC"/><rect x="0.5" y="3" width="16" height="10.8" rx="1" fill="url(#fg)"/></svg>
<div class="t" style="left:421px;top:869.07px;font-size:13.5px;letter-spacing:0.618px;color:#111;">Audio</div>
<svg class="a" style="left:400px;top:888px;" width="17" height="14" viewBox="0 0 17 14"><defs><linearGradient id="fg" x1="0" y1="0" x2="0" y2="1"><stop offset="0" stop-color="#8894A0"/><stop offset="1" stop-color="#4B555C"/></linearGradient></defs><path d="M1 1.5 Q1 0.5 2 0.5 L6.5 0.5 L7.8 2 L15.5 2 Q16.5 2 16.5 3 L16.5 13 Q16.5 13.8 15.5 13.8 L1.5 13.8 Q0.5 13.8 0.5 13 Z" fill="#D8DADC"/><rect x="0.5" y="3" width="16" height="10.8" rx="1" fill="url(#fg)"/></svg>
<div class="t" style="left:421px;top:888.07px;font-size:13.5px;letter-spacing:0.517px;color:#111;">Documentation</div>
<svg class="a" style="left:400px;top:907px;" width="17" height="14" viewBox="0 0 17 14"><defs><linearGradient id="fg" x1="0" y1="0" x2="0" y2="1"><stop offset="0" stop-color="#8894A0"/><stop offset="1" stop-color="#4B555C"/></linearGradient></defs><path d="M1 1.5 Q1 0.5 2 0.5 L6.5 0.5 L7.8 2 L15.5 2 Q16.5 2 16.5 3 L16.5 13 Q16.5 13.8 15.5 13.8 L1.5 13.8 Q0.5 13.8 0.5 13 Z" fill="#D8DADC"/><rect x="0.5" y="3" width="16" height="10.8" rx="1" fill="url(#fg)"/></svg>
<div class="t" style="left:421px;top:907.07px;font-size:13.5px;letter-spacing:0.41px;color:#111;">Gizmos</div>
<svg class="a" style="left:400px;top:926px;" width="17" height="14" viewBox="0 0 17 14"><defs><linearGradient id="fg" x1="0" y1="0" x2="0" y2="1"><stop offset="0" stop-color="#8894A0"/><stop offset="1" stop-color="#4B555C"/></linearGradient></defs><path d="M1 1.5 Q1 0.5 2 0.5 L6.5 0.5 L7.8 2 L15.5 2 Q16.5 2 16.5 3 L16.5 13 Q16.5 13.8 15.5 13.8 L1.5 13.8 Q0.5 13.8 0.5 13 Z" fill="#D8DADC"/><rect x="0.5" y="3" width="16" height="10.8" rx="1" fill="url(#fg)"/></svg>
<div class="t" style="left:421px;top:926.07px;font-size:13.5px;letter-spacing:0.401px;color:#111;">Localization</div>
<svg class="a" style="left:400px;top:945px;" width="17" height="14" viewBox="0 0 17 14"><defs><linearGradient id="fg" x1="0" y1="0" x2="0" y2="1"><stop offset="0" stop-color="#8894A0"/><stop offset="1" stop-color="#4B555C"/></linearGradient></defs><path d="M1 1.5 Q1 0.5 2 0.5 L6.5 0.5 L7.8 2 L15.5 2 Q16.5 2 16.5 3 L16.5 13 Q16.5 13.8 15.5 13.8 L1.5 13.8 Q0.5 13.8 0.5 13 Z" fill="#D8DADC"/><rect x="0.5" y="3" width="16" height="10.8" rx="1" fill="url(#fg)"/></svg>
<div class="t" style="left:421px;top:945.07px;font-size:13.5px;letter-spacing:-0.326px;color:#111;">Packages</div>
<svg class="a" style="left:400px;top:964px;" width="17" height="14" viewBox="0 0 17 14"><defs><linearGradient id="fg" x1="0" y1="0" x2="0" y2="1"><stop offset="0" stop-color="#8894A0"/><stop offset="1" stop-color="#4B555C"/></linearGradient></defs><path d="M1 1.5 Q1 0.5 2 0.5 L6.5 0.5 L7.8 2 L15.5 2 Q16.5 2 16.5 3 L16.5 13 Q16.5 13.8 15.5 13.8 L1.5 13.8 Q0.5 13.8 0.5 13 Z" fill="#D8DADC"/><rect x="0.5" y="3" width="16" height="10.8" rx="1" fill="url(#fg)"/></svg>
<div class="t" style="left:421px;top:964.07px;font-size:13.5px;letter-spacing:-0.087px;color:#111;">Prefabs</div>
<div class="a" style="left:401px;top:981px;width:17px;height:18px;background:#E4E4E4"></div>
<div class="t" style="left:405px;top:983.65px;font-size:14px;letter-spacing:0px;color:#555;">?</div>
<div class="t" style="left:421px;top:983.07px;font-size:13.5px;letter-spacing:-0.085px;color:#111;">Readme</div>
<svg class="a" style="left:400px;top:1002px;" width="17" height="14" viewBox="0 0 17 14"><defs><linearGradient id="fg" x1="0" y1="0" x2="0" y2="1"><stop offset="0" stop-color="#8894A0"/><stop offset="1" stop-color="#4B555C"/></linearGradient></defs><path d="M1 1.5 Q1 0.5 2 0.5 L6.5 0.5 L7.8 2 L15.5 2 Q16.5 2 16.5 3 L16.5 13 Q16.5 13.8 15.5 13.8 L1.5 13.8 Q0.5 13.8 0.5 13 Z" fill="#D8DADC"/><rect x="0.5" y="3" width="16" height="10.8" rx="1" fill="url(#fg)"/></svg>
<div class="t" style="left:421px;top:1002.07px;font-size:13.5px;letter-spacing:-0.465px;color:#111;">Scenes</div>
<svg class="a" style="left:400px;top:1021px;" width="17" height="14" viewBox="0 0 17 14"><defs><linearGradient id="fg" x1="0" y1="0" x2="0" y2="1"><stop offset="0" stop-color="#8894A0"/><stop offset="1" stop-color="#4B555C"/></linearGradient></defs><path d="M1 1.5 Q1 0.5 2 0.5 L6.5 0.5 L7.8 2 L15.5 2 Q16.5 2 16.5 3 L16.5 13 Q16.5 13.8 15.5 13.8 L1.5 13.8 Q0.5 13.8 0.5 13 Z" fill="#D8DADC"/><rect x="0.5" y="3" width="16" height="10.8" rx="1" fill="url(#fg)"/></svg>
<div class="t" style="left:421px;top:1021.07px;font-size:13.5px;letter-spacing:0.09px;color:#111;">Scripts</div>
<svg class="a" style="left:400px;top:1040px;" width="17" height="14" viewBox="0 0 17 14"><defs><linearGradient id="fg" x1="0" y1="0" x2="0" y2="1"><stop offset="0" stop-color="#8894A0"/><stop offset="1" stop-color="#4B555C"/></linearGradient></defs><path d="M1 1.5 Q1 0.5 2 0.5 L6.5 0.5 L7.8 2 L15.5 2 Q16.5 2 16.5 3 L16.5 13 Q16.5 13.8 15.5 13.8 L1.5 13.8 Q0.5 13.8 0.5 13 Z" fill="#D8DADC"/><rect x="0.5" y="3" width="16" height="10.8" rx="1" fill="url(#fg)"/></svg>
<div class="t" style="left:421px;top:1040.07px;font-size:13.5px;letter-spacing:0.625px;color:#111;">TutorialInfo</div>
<div class="a" style="left:382px;top:1178px;width:921px;height:20px;background:#DDDDDD;border-top:1px solid #A8A8A8"></div>
<svg class="a" style="left:386px;top:1181px;overflow:visible" width="16" height="15" viewBox="0 0 100 100"><path d="M0 50.5 L29.3 22.9 L43.5 19.8 L47.8 11.5 L87 0 L99.5 39.6 L93.5 50 L99.5 60.4 L87 100 L47.8 88.5 L43.5 81.3 L29.3 78.1 Z" fill="#111"/><path d="M21.7 46.4 L40.2 24.5 L71.7 16.7 L54.3 46.4 Z M21.7 55.2 L54.3 55.2 L71.7 84.4 L40.2 77 Z M65.2 50.5 L83.7 21.9 L91.3 48.9 L83.7 79.2 Z" fill="#fff"/></svg>
<div class="t" style="left:405px;top:1182.07px;font-size:13.5px;letter-spacing:0.353px;color:#111;">Assets/3DGamekitLite/Scenes/_TemplateScene.unity</div>
<div class="a" style="left:1224px;top:1187px;width:60px;height:3px;background:#8A8A8A;border-radius:2px"></div>
<div class="a" style="left:1217px;top:1182px;width:11px;height:11px;background:linear-gradient(#FFFFFF,#D8D8D8);border:1px solid #555;border-radius:50%"></div>
<div class="a" style="left:1308px;top:804px;width:307px;height:394px;background:#C2C2C2;border:1px solid #8C8C8C;border-top:none"></div>
<div class="tab" style="left:1309px;top:785px;width:106px;height:19px;"></div>
<div class="a" style="left:1310px;top:785px;width:104px;height:2px;background:#6E9DDA;border-radius:3px 3px 0 0"></div>
<div class="t" style="left:1316px;top:788.07px;font-size:13.5px;letter-spacing:0.219px;color:#222;">ProBuilder</div>
<svg class="a" style="left:1593px;top:793px;" width="18" height="9" viewBox="0 0 18 9"><path d="M0 2.5 L5 2.5 L2.5 5.5 Z" fill="#333"/><rect x="7" y="0" width="10" height="1.6" fill="#333"/><rect x="7" y="3" width="10" height="1.6" fill="#777"/><rect x="7" y="6" width="10" height="1.6" fill="#333"/></svg>
<svg class="a" style="left:1453px;top:807px;" width="14" height="8" viewBox="0 0 14 8"><path d="M0 7.5 L14 7.5 L7 0.5 Z" fill="#888"/></svg>
<svg class="a" style="left:1453px;top:1187px;" width="14" height="8" viewBox="0 0 14 8"><path d="M0 0.5 L14 0.5 L7 7.5 Z" fill="#333"/></svg>
<div class="a" style="left:1311px;top:823.5px;width:5px;height:20px;background:#B46E3A"></div>
<div class="t" style="left:1321px;top:826.57px;font-size:13.5px;letter-spacing:-0.174px;color:#111;">New Shape</div>
<div class="a" style="left:1311px;top:853.3px;width:5px;height:20px;background:#B46E3A"></div>
<div class="t" style="left:1321px;top:856.37px;font-size:13.5px;letter-spacing:-0.093px;color:#111;">New Poly Shape</div>
<div class="a" style="left:1311px;top:883.1px;width:5px;height:20px;background:#B46E3A"></div>
<div class="t" style="left:1321px;top:886.17px;font-size:13.5px;letter-spacing:0.483px;color:#111;">Smoothing</div>
<div class="a" style="left:1311px;top:912.9px;width:5px;height:20px;background:#B46E3A"></div>
<div class="t" style="left:1321px;top:915.97px;font-size:13.5px;letter-spacing:0.373px;color:#111;">Vertex Colors</div>
<div class="a" style="left:1584px;top:912.9px;width:25px;height:19px;border:1.5px solid #B46E3A"></div>
<svg class="a" style="left:1590px;top:915.9px;" width="13" height="13" viewBox="0 0 13 13"><path d="M6.5 2 V11 M2 6.5 H11" stroke="#222" stroke-width="1.1"/></svg>
<div class="a" style="left:1311px;top:942.7px;width:5px;height:20px;background:#B46E3A"></div>
<div class="t" style="left:1321px;top:945.77px;font-size:13.5px;letter-spacing:0.277px;color:#111;">Material Editor</div>
<div class="a" style="left:1311px;top:972.5px;width:5px;height:20px;background:#B46E3A"></div>
<div class="t" style="left:1321px;top:975.57px;font-size:13.5px;letter-spacing:0.029px;color:#111;">UV Editor</div>
<div class="a" style="left:1311px;top:1002.3px;width:5px;height:20px;background:#3E88B8"></div>
<div class="t" style="left:1321px;top:1005.37px;font-size:13.5px;letter-spacing:0.241px;color:#111;">Select Hidden: Off</div>
<div class="a" style="left:1311px;top:1032.1px;width:5px;height:20px;background:#3E88B8"></div>
<div class="t" style="left:1321px;top:1035.17px;font-size:13.5px;letter-spacing:0.251px;color:#111;">Handle: World</div>
<div class="a" style="left:1311px;top:1061.9px;width:5px;height:20px;background:#9DB47A"></div>
<div class="t" style="left:1321px;top:1064.97px;font-size:13.5px;letter-spacing:0.427px;color:#777;">Triangulate</div>
<div class="a" style="left:1311px;top:1091.7px;width:5px;height:20px;background:#9DB47A"></div>
<div class="t" style="left:1321px;top:1094.77px;font-size:13.5px;letter-spacing:0.481px;color:#777;">Conform Normals</div>
<div class="a" style="left:1311px;top:1121.5px;width:5px;height:20px;background:#6B9E2E"></div>
<div class="t" style="left:1321px;top:1124.57px;font-size:13.5px;letter-spacing:-0.118px;color:#111;">Generate UV2</div>
<div class="a" style="left:1584px;top:1121.5px;width:25px;height:19px;border:1.5px solid #6B9E2E"></div>
<svg class="a" style="left:1590px;top:1124.5px;" width="13" height="13" viewBox="0 0 13 13"><path d="M6.5 2 V11 M2 6.5 H11" stroke="#222" stroke-width="1.1"/></svg>
<div class="a" style="left:1311px;top:1151.3px;width:5px;height:20px;background:#9DB47A"></div>
<div class="t" style="left:1321px;top:1154.37px;font-size:13.5px;letter-spacing:0.537px;color:#777;">Export</div>
<div class="a" style="left:1584px;top:1151.3px;width:25px;height:19px;border:1.5px solid #9DB47A"></div>
<svg class="a" style="left:1590px;top:1154.3px;" width="13" height="13" viewBox="0 0 13 13"><path d="M6.5 2 V11 M2 6.5 H11" stroke="#777" stroke-width="1.1"/></svg>
<div class="a" style="left:1311px;top:1180px;width:5px;height:3px;background:#9DB47A"></div>
<div class="a" style="left:1584px;top:1180px;width:25px;height:3px;border:1.5px solid #9DB47A;border-bottom:none"></div>
<div class="a" style="left:1617px;top:85px;width:382px;height:1113px;background:#C2C2C2;border-left:1px solid #8C8C8C;border-bottom:2px solid #8E8E8E"></div>
<div class="a" style="left:1618px;top:85px;width:1px;height:1113px;background:#D2D2D2"></div>
<div class="tab" style="left:1619px;top:66px;width:118px;height:20px;"></div>
<svg class="a" style="left:1630px;top:69px;" width="12" height="12" viewBox="0 0 12 12"><circle cx="6" cy="6" r="6" fill="#2A2A2A"/><rect x="5" y="5" width="2.2" height="5" fill="#fff"/><circle cx="6.1" cy="3" r="1.2" fill="#fff"/></svg>
<div class="t" style="left:1647px;top:68.57px;font-size:13.5px;letter-spacing:0.384px;color:#222;">Inspector</div>
<svg class="a" style="left:1962px;top:71px;" width="9" height="11" viewBox="0 0 9 11"><path d="M2 5 L2 3.2 A2.5 2.5 0 0 1 7 3.2 L7 5" fill="none" stroke="#444" stroke-width="1.3"/><rect x="0.5" y="5" width="8" height="6" fill="#444"/></svg>
<svg class="a" style="left:1976px;top:75px;" width="18" height="9" viewBox="0 0 18 9"><path d="M0 2.5 L5 2.5 L2.5 5.5 Z" fill="#333"/><rect x="7" y="0" width="10" height="1.6" fill="#333"/><rect x="7" y="3" width="10" height="1.6" fill="#777"/><rect x="7" y="6" width="10" height="1.6" fill="#333"/></svg>
<div class="a" style="left:1619px;top:86px;width:380px;height:53px;background:linear-gradient(#D8D8D8,#E0E0E0);border-bottom:1px solid #9E9E9E"></div>
<svg class="a" style="left:1625.8px;top:93px;overflow:visible" width="33" height="35" viewBox="0 0 100 100"><path d="M0 50.5 L29.3 22.9 L43.5 19.8 L47.8 11.5 L87 0 L99.5 39.6 L93.5 50 L99.5 60.4 L87 100 L47.8 88.5 L43.5 81.3 L29.3 78.1 Z" fill="#111"/><path d="M21.7 46.4 L40.2 24.5 L71.7 16.7 L54.3 46.4 Z M21.7 55.2 L54.3 55.2 L71.7 84.4 L40.2 77 Z M65.2 50.5 L83.7 21.9 L91.3 48.9 L83.7 79.2 Z" fill="#fff"/></svg>
<div class="t" style="left:1672px;top:92.73px;font-size:14.5px;letter-spacing:0.153px;color:#111;">_TemplateScene</div>
<svg class="a" style="left:1957px;top:91.5px;" width="16" height="17" viewBox="0 0 16 17"><path d="M2.5 1.2 L13.5 0.8 Q15 0.8 15 2.3 L15 14.5 Q15 16 13.5 16 L3 16.2 Q1 16.2 1 14.5 L1 2.5 Q1 1.2 2.5 1.2Z" fill="#2F4F86"/><rect x="4" y="2" width="10" height="13" fill="#6A8CC0"/><path d="M13.5 2 L14.5 2.5 L14.5 14.5 L13.5 15Z" fill="#F4F4F4"/><path d="M2 2 L3.5 1.5 L3.5 15 L2 15.5Z" fill="#A9C0E0"/><text x="8.8" y="12" font-size="10" text-anchor="middle" fill="#DDE6F4" font-family="Liberation Sans" font-weight="bold">?</text></svg>
<svg class="a" style="left:1979px;top:92px;" width="18" height="16" viewBox="0 0 18 16"><path d="M7.00 1.10 L8.61 3.12 L11.17 2.83 L10.88 5.39 L12.90 7.00 L10.88 8.61 L11.17 11.17 L8.61 10.88 L7.00 12.90 L5.39 10.88 L2.83 11.17 L3.12 8.61 L1.10 7.00 L3.12 5.39 L2.83 2.83 L5.39 3.12 Z" fill="#151515"/><circle cx="7" cy="7" r="2" fill="#DDDDDD"/><path d="M12.5 10.5 L16.5 10.5 L14.5 13.5 Z" fill="#222"/></svg>
<div class="a" style="left:1951px;top:114px;width:41px;height:18px;border:1px solid #7E7E7E;border-radius:3px;background:linear-gradient(#FDFDFD,#E2E2E2)"></div>
<div class="t" style="left:1957px;top:116.92px;font-size:12.5px;letter-spacing:-0.859px;color:#111;">Open</div>
<div class="a" style="left:1618px;top:1123px;width:381px;height:21px;background:linear-gradient(#6E6E6E,#4C4C4C);border-top:1px solid #8A8A8A"></div>
<div class="t" style="left:1623px;top:1126.57px;font-size:13.5px;letter-spacing:0.102px;color:#EAEAEA;font-weight:bold;">Asset Labels</div>
<div class="a" style="left:1618px;top:1144px;width:381px;height:52px;background:linear-gradient(#262626,#2F2F2F 30%,#2F2F2F)"></div>
<div class="a" style="left:1969px;top:1151px;width:25px;height:18px;background:#3A6BC2;border-radius:9px"></div>
<svg class="a" style="left:1974px;top:1153px;" width="14" height="14" viewBox="0 0 14 14"><path d="M1.5 2.5 L6 1.5 L12.5 8 L8 12.5 L1.5 6 Z" fill="#fff"/><circle cx="4.3" cy="4.3" r="1.1" fill="#3A6BC2"/></svg>
<div class="t" style="left:1624px;top:1179.57px;font-size:13.5px;letter-spacing:0.16px;color:#D8D8D8;">AssetBundle</div>
<div class="a" style="left:1730px;top:1178px;width:189px;height:17px;border:1px solid #222;border-radius:3px;background:linear-gradient(#5E5E5E,#464646)"></div>
<div class="t" style="left:1737px;top:1179.84px;font-size:12px;letter-spacing:-1.029px;color:#DDDDDD;">None</div>
<svg class="a" style="left:1906px;top:1181px;" width="6" height="11" viewBox="0 0 6 11"><path d="M0 4.5 L3 0.5 L6 4.5 Z M0 6.5 L6 6.5 L3 10.5Z" fill="#AAA"/></svg>
<div class="a" style="left:1928px;top:1178px;width:66px;height:17px;border:1px solid #222;border-radius:3px;background:linear-gradient(#5E5E5E,#464646)"></div>
<div class="t" style="left:1934px;top:1179.84px;font-size:12px;letter-spacing:-0.895px;color:#DDDDDD;">None</div>
<svg class="a" style="left:1981px;top:1181px;" width="6" height="11" viewBox="0 0 6 11"><path d="M0 4.5 L3 0.5 L6 4.5 Z M0 6.5 L6 6.5 L3 10.5Z" fill="#AAA"/></svg>
</div>
</body></html>
